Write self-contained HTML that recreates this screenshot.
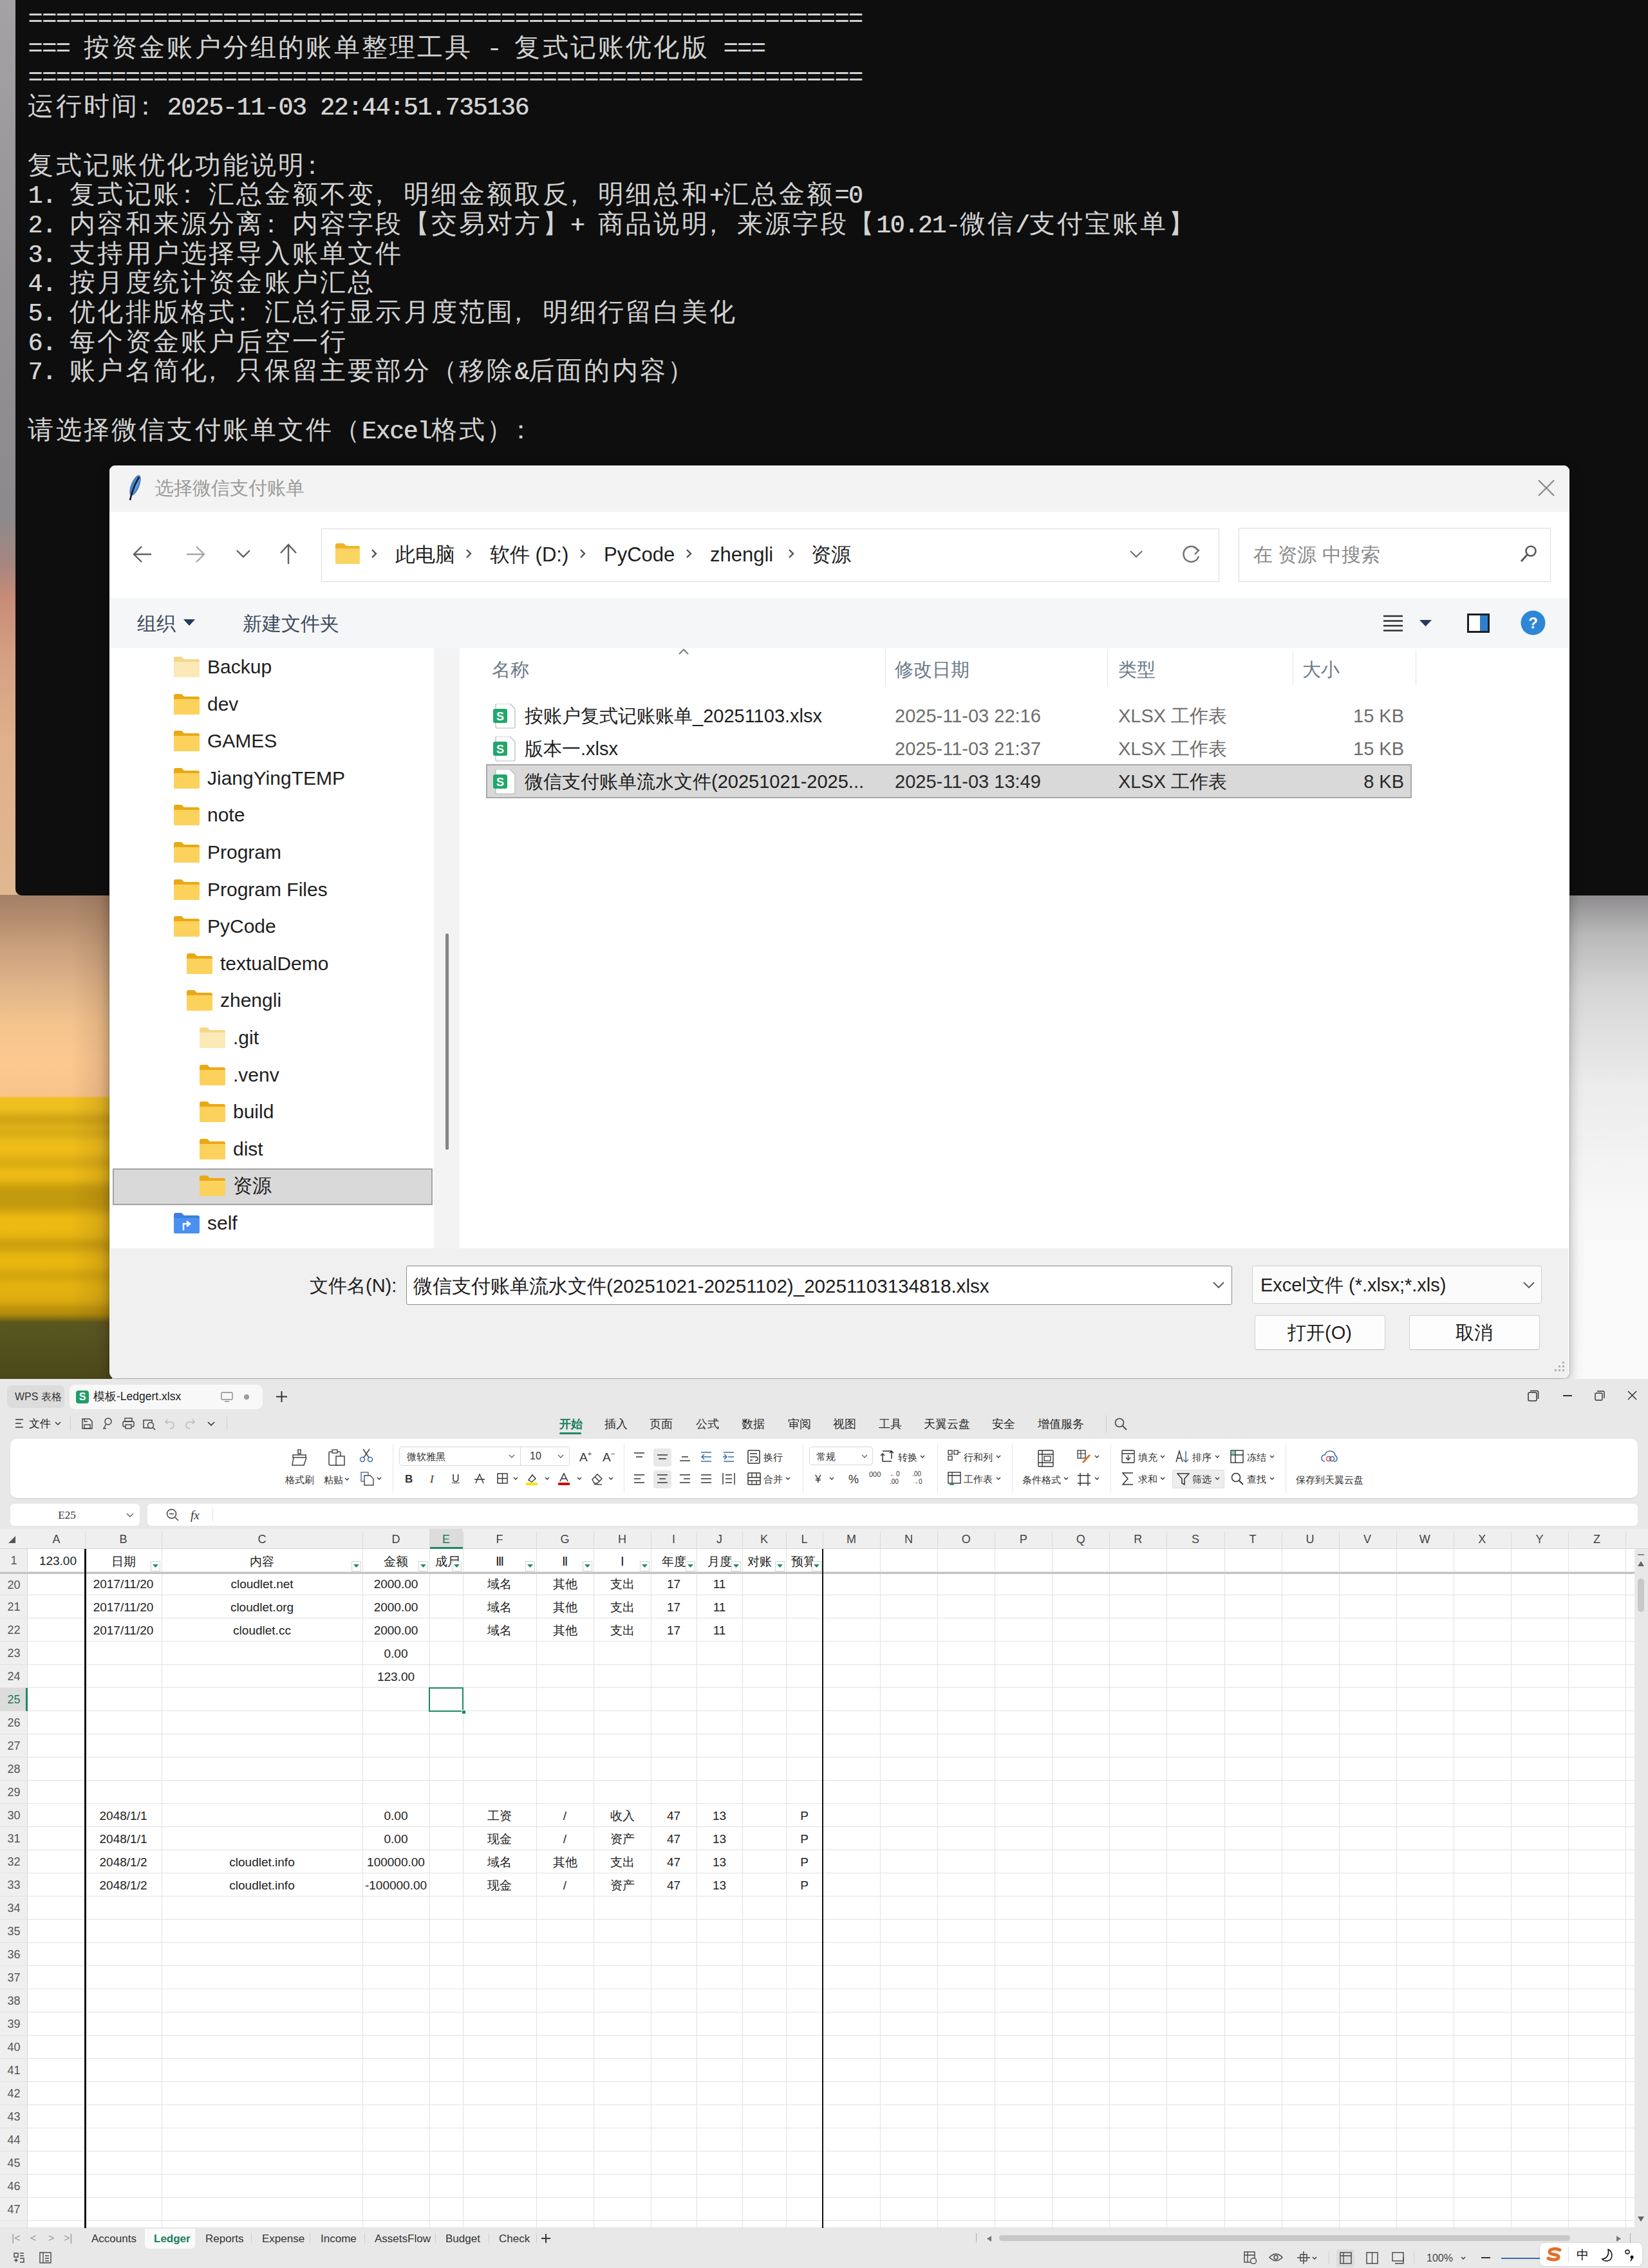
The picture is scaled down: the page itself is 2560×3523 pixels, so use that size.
<!DOCTYPE html><html><head><meta charset="utf-8"><style>
*{margin:0;padding:0}
html,body{width:2560px;height:3523px;overflow:hidden;background:#fff}
body{position:relative;font-family:"Liberation Sans",sans-serif}
div,svg{position:absolute}
.t{white-space:nowrap}
.tl{left:0;height:48px;width:2560px;font-family:"Liberation Mono",monospace;color:#d2d2d2}
.tl i{position:absolute;top:0;font-style:normal;line-height:48px}
.ta{font-size:38px;text-shadow:0.7px 0 0 currentColor}
.tc{font-size:40px;font-weight:500}
</style></head><body><div style="left:0px;top:0px;width:40px;height:1400px;background:linear-gradient(180deg,#a4a2a4 0px,#929092 500px,#8c8a8c 800px,#a88680 880px,#c88c78 930px,#d4a084 1020px,#deb08c 1150px,#e0b890 1400px)"></div>
<div style="left:0px;top:1390px;width:174px;height:753px;background:linear-gradient(180deg,#a48068 0px,#b08a6c 30px,#c8a07c 80px,#e0b488 140px,#f4c48e 200px,#fcc890 260px,#f8c48c 312px,#f0c020 316px,#eebc14 450px,#e8b610 600px,#d8a810 650px,#5a5820 664px,#4a4818 753px)"></div>
<div style="left:110px;top:1390px;width:64px;height:753px;background:linear-gradient(90deg,rgba(90,60,40,0),rgba(90,60,40,0.18));"></div>
<div style="left:-20px;top:1732px;width:214px;height:14px;background:rgba(100,75,0,0.3);filter:blur(7px)"></div>
<div style="left:-20px;top:1755px;width:214px;height:10px;background:rgba(100,75,0,0.25);filter:blur(7px)"></div>
<div style="left:-20px;top:1800px;width:214px;height:12px;background:rgba(100,75,0,0.22);filter:blur(7px)"></div>
<div style="left:-20px;top:1838px;width:214px;height:44px;background:rgba(100,75,0,0.3);filter:blur(7px)"></div>
<div style="left:-20px;top:1925px;width:214px;height:18px;background:rgba(100,75,0,0.25);filter:blur(7px)"></div>
<div style="left:-20px;top:1975px;width:214px;height:14px;background:rgba(100,75,0,0.2);filter:blur(7px)"></div>
<div style="left:-20px;top:2028px;width:214px;height:24px;background:rgba(100,75,0,0.3);filter:blur(7px)"></div>
<div style="left:2436px;top:1390px;width:124px;height:753px;background:linear-gradient(180deg,#8e8c8e 0px,#b8b8b8 60px,#d6d6d6 150px,#ececec 300px,#f8f8f8 500px,#fafafa 753px)"></div>
<div style="left:24px;top:0px;width:2536px;height:1391px;background:#0e0e0e;border-bottom-left-radius:10px"></div>
<div class="tl" style="top:7.0px"><i class="ta" style="left:43.4px">=</i><i class="ta" style="left:65.0px">=</i><i class="ta" style="left:86.6px">=</i><i class="ta" style="left:108.2px">=</i><i class="ta" style="left:129.8px">=</i><i class="ta" style="left:151.4px">=</i><i class="ta" style="left:173.0px">=</i><i class="ta" style="left:194.6px">=</i><i class="ta" style="left:216.2px">=</i><i class="ta" style="left:237.8px">=</i><i class="ta" style="left:259.4px">=</i><i class="ta" style="left:281.0px">=</i><i class="ta" style="left:302.6px">=</i><i class="ta" style="left:324.2px">=</i><i class="ta" style="left:345.8px">=</i><i class="ta" style="left:367.4px">=</i><i class="ta" style="left:389.0px">=</i><i class="ta" style="left:410.6px">=</i><i class="ta" style="left:432.2px">=</i><i class="ta" style="left:453.8px">=</i><i class="ta" style="left:475.4px">=</i><i class="ta" style="left:497.0px">=</i><i class="ta" style="left:518.6px">=</i><i class="ta" style="left:540.2px">=</i><i class="ta" style="left:561.8px">=</i><i class="ta" style="left:583.4px">=</i><i class="ta" style="left:605.0px">=</i><i class="ta" style="left:626.6px">=</i><i class="ta" style="left:648.2px">=</i><i class="ta" style="left:669.8px">=</i><i class="ta" style="left:691.4px">=</i><i class="ta" style="left:713.0px">=</i><i class="ta" style="left:734.6px">=</i><i class="ta" style="left:756.2px">=</i><i class="ta" style="left:777.8px">=</i><i class="ta" style="left:799.4px">=</i><i class="ta" style="left:821.0px">=</i><i class="ta" style="left:842.6px">=</i><i class="ta" style="left:864.2px">=</i><i class="ta" style="left:885.8px">=</i><i class="ta" style="left:907.4px">=</i><i class="ta" style="left:929.0px">=</i><i class="ta" style="left:950.6px">=</i><i class="ta" style="left:972.2px">=</i><i class="ta" style="left:993.8px">=</i><i class="ta" style="left:1015.4px">=</i><i class="ta" style="left:1037.0px">=</i><i class="ta" style="left:1058.6px">=</i><i class="ta" style="left:1080.2px">=</i><i class="ta" style="left:1101.8px">=</i><i class="ta" style="left:1123.4px">=</i><i class="ta" style="left:1145.0px">=</i><i class="ta" style="left:1166.6px">=</i><i class="ta" style="left:1188.2px">=</i><i class="ta" style="left:1209.8px">=</i><i class="ta" style="left:1231.4px">=</i><i class="ta" style="left:1253.0px">=</i><i class="ta" style="left:1274.6px">=</i><i class="ta" style="left:1296.2px">=</i><i class="ta" style="left:1317.8px">=</i></div>
<div class="tl" style="top:52.7px"><i class="ta" style="left:43.4px">=</i><i class="ta" style="left:65.0px">=</i><i class="ta" style="left:86.6px">=</i><i class="tc" style="left:129.8px">按</i><i class="tc" style="left:173.0px">资</i><i class="tc" style="left:216.2px">金</i><i class="tc" style="left:259.4px">账</i><i class="tc" style="left:302.6px">户</i><i class="tc" style="left:345.8px">分</i><i class="tc" style="left:389.0px">组</i><i class="tc" style="left:432.2px">的</i><i class="tc" style="left:475.4px">账</i><i class="tc" style="left:518.6px">单</i><i class="tc" style="left:561.8px">整</i><i class="tc" style="left:605.0px">理</i><i class="tc" style="left:648.2px">工</i><i class="tc" style="left:691.4px">具</i><i class="ta" style="left:756.2px">-</i><i class="tc" style="left:799.4px">复</i><i class="tc" style="left:842.6px">式</i><i class="tc" style="left:885.8px">记</i><i class="tc" style="left:929.0px">账</i><i class="tc" style="left:972.2px">优</i><i class="tc" style="left:1015.4px">化</i><i class="tc" style="left:1058.6px">版</i><i class="ta" style="left:1123.4px">=</i><i class="ta" style="left:1145.0px">=</i><i class="ta" style="left:1166.6px">=</i></div>
<div class="tl" style="top:98.4px"><i class="ta" style="left:43.4px">=</i><i class="ta" style="left:65.0px">=</i><i class="ta" style="left:86.6px">=</i><i class="ta" style="left:108.2px">=</i><i class="ta" style="left:129.8px">=</i><i class="ta" style="left:151.4px">=</i><i class="ta" style="left:173.0px">=</i><i class="ta" style="left:194.6px">=</i><i class="ta" style="left:216.2px">=</i><i class="ta" style="left:237.8px">=</i><i class="ta" style="left:259.4px">=</i><i class="ta" style="left:281.0px">=</i><i class="ta" style="left:302.6px">=</i><i class="ta" style="left:324.2px">=</i><i class="ta" style="left:345.8px">=</i><i class="ta" style="left:367.4px">=</i><i class="ta" style="left:389.0px">=</i><i class="ta" style="left:410.6px">=</i><i class="ta" style="left:432.2px">=</i><i class="ta" style="left:453.8px">=</i><i class="ta" style="left:475.4px">=</i><i class="ta" style="left:497.0px">=</i><i class="ta" style="left:518.6px">=</i><i class="ta" style="left:540.2px">=</i><i class="ta" style="left:561.8px">=</i><i class="ta" style="left:583.4px">=</i><i class="ta" style="left:605.0px">=</i><i class="ta" style="left:626.6px">=</i><i class="ta" style="left:648.2px">=</i><i class="ta" style="left:669.8px">=</i><i class="ta" style="left:691.4px">=</i><i class="ta" style="left:713.0px">=</i><i class="ta" style="left:734.6px">=</i><i class="ta" style="left:756.2px">=</i><i class="ta" style="left:777.8px">=</i><i class="ta" style="left:799.4px">=</i><i class="ta" style="left:821.0px">=</i><i class="ta" style="left:842.6px">=</i><i class="ta" style="left:864.2px">=</i><i class="ta" style="left:885.8px">=</i><i class="ta" style="left:907.4px">=</i><i class="ta" style="left:929.0px">=</i><i class="ta" style="left:950.6px">=</i><i class="ta" style="left:972.2px">=</i><i class="ta" style="left:993.8px">=</i><i class="ta" style="left:1015.4px">=</i><i class="ta" style="left:1037.0px">=</i><i class="ta" style="left:1058.6px">=</i><i class="ta" style="left:1080.2px">=</i><i class="ta" style="left:1101.8px">=</i><i class="ta" style="left:1123.4px">=</i><i class="ta" style="left:1145.0px">=</i><i class="ta" style="left:1166.6px">=</i><i class="ta" style="left:1188.2px">=</i><i class="ta" style="left:1209.8px">=</i><i class="ta" style="left:1231.4px">=</i><i class="ta" style="left:1253.0px">=</i><i class="ta" style="left:1274.6px">=</i><i class="ta" style="left:1296.2px">=</i><i class="ta" style="left:1317.8px">=</i></div>
<div class="tl" style="top:144.1px"><i class="tc" style="left:43.4px">运</i><i class="tc" style="left:86.6px">行</i><i class="tc" style="left:129.8px">时</i><i class="tc" style="left:173.0px">间</i><i class="tc" style="left:206.2px">：</i><i class="ta" style="left:259.4px">2</i><i class="ta" style="left:281.0px">0</i><i class="ta" style="left:302.6px">2</i><i class="ta" style="left:324.2px">5</i><i class="ta" style="left:345.8px">-</i><i class="ta" style="left:367.4px">1</i><i class="ta" style="left:389.0px">1</i><i class="ta" style="left:410.6px">-</i><i class="ta" style="left:432.2px">0</i><i class="ta" style="left:453.8px">3</i><i class="ta" style="left:497.0px">2</i><i class="ta" style="left:518.6px">2</i><i class="ta" style="left:540.2px">:</i><i class="ta" style="left:561.8px">4</i><i class="ta" style="left:583.4px">4</i><i class="ta" style="left:605.0px">:</i><i class="ta" style="left:626.6px">5</i><i class="ta" style="left:648.2px">1</i><i class="ta" style="left:669.8px">.</i><i class="ta" style="left:691.4px">7</i><i class="ta" style="left:713.0px">3</i><i class="ta" style="left:734.6px">5</i><i class="ta" style="left:756.2px">1</i><i class="ta" style="left:777.8px">3</i><i class="ta" style="left:799.4px">6</i></div>
<div class="tl" style="top:189.8px"></div>
<div class="tl" style="top:235.5px"><i class="tc" style="left:43.4px">复</i><i class="tc" style="left:86.6px">式</i><i class="tc" style="left:129.8px">记</i><i class="tc" style="left:173.0px">账</i><i class="tc" style="left:216.2px">优</i><i class="tc" style="left:259.4px">化</i><i class="tc" style="left:302.6px">功</i><i class="tc" style="left:345.8px">能</i><i class="tc" style="left:389.0px">说</i><i class="tc" style="left:432.2px">明</i><i class="tc" style="left:465.4px">：</i></div>
<div class="tl" style="top:281.2px"><i class="ta" style="left:43.4px">1</i><i class="ta" style="left:65.0px">.</i><i class="tc" style="left:108.2px">复</i><i class="tc" style="left:151.4px">式</i><i class="tc" style="left:194.6px">记</i><i class="tc" style="left:237.8px">账</i><i class="tc" style="left:271.0px">：</i><i class="tc" style="left:324.2px">汇</i><i class="tc" style="left:367.4px">总</i><i class="tc" style="left:410.6px">金</i><i class="tc" style="left:453.8px">额</i><i class="tc" style="left:497.0px">不</i><i class="tc" style="left:540.2px">变</i><i class="tc" style="left:569.4px">，</i><i class="tc" style="left:626.6px">明</i><i class="tc" style="left:669.8px">细</i><i class="tc" style="left:713.0px">金</i><i class="tc" style="left:756.2px">额</i><i class="tc" style="left:799.4px">取</i><i class="tc" style="left:842.6px">反</i><i class="tc" style="left:871.8px">，</i><i class="tc" style="left:929.0px">明</i><i class="tc" style="left:972.2px">细</i><i class="tc" style="left:1015.4px">总</i><i class="tc" style="left:1058.6px">和</i><i class="ta" style="left:1101.8px">+</i><i class="tc" style="left:1123.4px">汇</i><i class="tc" style="left:1166.6px">总</i><i class="tc" style="left:1209.8px">金</i><i class="tc" style="left:1253.0px">额</i><i class="ta" style="left:1296.2px">=</i><i class="ta" style="left:1317.8px">0</i></div>
<div class="tl" style="top:326.9px"><i class="ta" style="left:43.4px">2</i><i class="ta" style="left:65.0px">.</i><i class="tc" style="left:108.2px">内</i><i class="tc" style="left:151.4px">容</i><i class="tc" style="left:194.6px">和</i><i class="tc" style="left:237.8px">来</i><i class="tc" style="left:281.0px">源</i><i class="tc" style="left:324.2px">分</i><i class="tc" style="left:367.4px">离</i><i class="tc" style="left:400.6px">：</i><i class="tc" style="left:453.8px">内</i><i class="tc" style="left:497.0px">容</i><i class="tc" style="left:540.2px">字</i><i class="tc" style="left:583.4px">段</i><i class="tc" style="left:626.6px">【</i><i class="tc" style="left:669.8px">交</i><i class="tc" style="left:713.0px">易</i><i class="tc" style="left:756.2px">对</i><i class="tc" style="left:799.4px">方</i><i class="tc" style="left:842.6px">】</i><i class="ta" style="left:885.8px">+</i><i class="tc" style="left:929.0px">商</i><i class="tc" style="left:972.2px">品</i><i class="tc" style="left:1015.4px">说</i><i class="tc" style="left:1058.6px">明</i><i class="tc" style="left:1087.8px">，</i><i class="tc" style="left:1145.0px">来</i><i class="tc" style="left:1188.2px">源</i><i class="tc" style="left:1231.4px">字</i><i class="tc" style="left:1274.6px">段</i><i class="tc" style="left:1317.8px">【</i><i class="ta" style="left:1361.0px">1</i><i class="ta" style="left:1382.6px">0</i><i class="ta" style="left:1404.2px">.</i><i class="ta" style="left:1425.8px">2</i><i class="ta" style="left:1447.4px">1</i><i class="ta" style="left:1469.0px">-</i><i class="tc" style="left:1490.6px">微</i><i class="tc" style="left:1533.8px">信</i><i class="ta" style="left:1577.0px">/</i><i class="tc" style="left:1598.6px">支</i><i class="tc" style="left:1641.8px">付</i><i class="tc" style="left:1685.0px">宝</i><i class="tc" style="left:1728.2px">账</i><i class="tc" style="left:1771.4px">单</i><i class="tc" style="left:1814.6px">】</i></div>
<div class="tl" style="top:372.6px"><i class="ta" style="left:43.4px">3</i><i class="ta" style="left:65.0px">.</i><i class="tc" style="left:108.2px">支</i><i class="tc" style="left:151.4px">持</i><i class="tc" style="left:194.6px">用</i><i class="tc" style="left:237.8px">户</i><i class="tc" style="left:281.0px">选</i><i class="tc" style="left:324.2px">择</i><i class="tc" style="left:367.4px">导</i><i class="tc" style="left:410.6px">入</i><i class="tc" style="left:453.8px">账</i><i class="tc" style="left:497.0px">单</i><i class="tc" style="left:540.2px">文</i><i class="tc" style="left:583.4px">件</i></div>
<div class="tl" style="top:418.3px"><i class="ta" style="left:43.4px">4</i><i class="ta" style="left:65.0px">.</i><i class="tc" style="left:108.2px">按</i><i class="tc" style="left:151.4px">月</i><i class="tc" style="left:194.6px">度</i><i class="tc" style="left:237.8px">统</i><i class="tc" style="left:281.0px">计</i><i class="tc" style="left:324.2px">资</i><i class="tc" style="left:367.4px">金</i><i class="tc" style="left:410.6px">账</i><i class="tc" style="left:453.8px">户</i><i class="tc" style="left:497.0px">汇</i><i class="tc" style="left:540.2px">总</i></div>
<div class="tl" style="top:464.0px"><i class="ta" style="left:43.4px">5</i><i class="ta" style="left:65.0px">.</i><i class="tc" style="left:108.2px">优</i><i class="tc" style="left:151.4px">化</i><i class="tc" style="left:194.6px">排</i><i class="tc" style="left:237.8px">版</i><i class="tc" style="left:281.0px">格</i><i class="tc" style="left:324.2px">式</i><i class="tc" style="left:357.4px">：</i><i class="tc" style="left:410.6px">汇</i><i class="tc" style="left:453.8px">总</i><i class="tc" style="left:497.0px">行</i><i class="tc" style="left:540.2px">显</i><i class="tc" style="left:583.4px">示</i><i class="tc" style="left:626.6px">月</i><i class="tc" style="left:669.8px">度</i><i class="tc" style="left:713.0px">范</i><i class="tc" style="left:756.2px">围</i><i class="tc" style="left:785.4px">，</i><i class="tc" style="left:842.6px">明</i><i class="tc" style="left:885.8px">细</i><i class="tc" style="left:929.0px">行</i><i class="tc" style="left:972.2px">留</i><i class="tc" style="left:1015.4px">白</i><i class="tc" style="left:1058.6px">美</i><i class="tc" style="left:1101.8px">化</i></div>
<div class="tl" style="top:509.7px"><i class="ta" style="left:43.4px">6</i><i class="ta" style="left:65.0px">.</i><i class="tc" style="left:108.2px">每</i><i class="tc" style="left:151.4px">个</i><i class="tc" style="left:194.6px">资</i><i class="tc" style="left:237.8px">金</i><i class="tc" style="left:281.0px">账</i><i class="tc" style="left:324.2px">户</i><i class="tc" style="left:367.4px">后</i><i class="tc" style="left:410.6px">空</i><i class="tc" style="left:453.8px">一</i><i class="tc" style="left:497.0px">行</i></div>
<div class="tl" style="top:555.4px"><i class="ta" style="left:43.4px">7</i><i class="ta" style="left:65.0px">.</i><i class="tc" style="left:108.2px">账</i><i class="tc" style="left:151.4px">户</i><i class="tc" style="left:194.6px">名</i><i class="tc" style="left:237.8px">简</i><i class="tc" style="left:281.0px">化</i><i class="tc" style="left:310.2px">，</i><i class="tc" style="left:367.4px">只</i><i class="tc" style="left:410.6px">保</i><i class="tc" style="left:453.8px">留</i><i class="tc" style="left:497.0px">主</i><i class="tc" style="left:540.2px">要</i><i class="tc" style="left:583.4px">部</i><i class="tc" style="left:626.6px">分</i><i class="tc" style="left:669.8px">（</i><i class="tc" style="left:713.0px">移</i><i class="tc" style="left:756.2px">除</i><i class="ta" style="left:799.4px">&amp;</i><i class="tc" style="left:821.0px">后</i><i class="tc" style="left:864.2px">面</i><i class="tc" style="left:907.4px">的</i><i class="tc" style="left:950.6px">内</i><i class="tc" style="left:993.8px">容</i><i class="tc" style="left:1037.0px">）</i></div>
<div class="tl" style="top:601.1px"></div>
<div class="tl" style="top:646.8px"><i class="tc" style="left:43.4px">请</i><i class="tc" style="left:86.6px">选</i><i class="tc" style="left:129.8px">择</i><i class="tc" style="left:173.0px">微</i><i class="tc" style="left:216.2px">信</i><i class="tc" style="left:259.4px">支</i><i class="tc" style="left:302.6px">付</i><i class="tc" style="left:345.8px">账</i><i class="tc" style="left:389.0px">单</i><i class="tc" style="left:432.2px">文</i><i class="tc" style="left:475.4px">件</i><i class="tc" style="left:518.6px">（</i><i class="ta" style="left:561.8px">E</i><i class="ta" style="left:583.4px">x</i><i class="ta" style="left:605.0px">c</i><i class="ta" style="left:626.6px">e</i><i class="ta" style="left:648.2px">l</i><i class="tc" style="left:669.8px">格</i><i class="tc" style="left:713.0px">式</i><i class="tc" style="left:756.2px">）</i><i class="tc" style="left:789.4px">：</i></div>
<div style="left:170px;top:723px;width:2268px;height:1418px;background:#fff;border-radius:9px;box-shadow:0 0 0 1px rgba(0,0,0,0.18),0 6px 20px rgba(0,0,0,0.30)"></div>
<div style="left:170px;top:723px;width:2268px;height:72px;background:#f3f3f3;border-radius:9px 9px 0 0"></div>
<svg class="s" style="left:194px;top:735px;" width="30" height="44" viewBox="0 0 30 44"><ellipse cx="16" cy="19" rx="6.5" ry="17" transform="rotate(22 16 19)" fill="#4a82c0"/><ellipse cx="17" cy="17" rx="3" ry="12" transform="rotate(22 16 19)" fill="#7ab0e0" opacity="0.6"/><path d="M22 6 C16 16 11 28 8 42" stroke="#0c1c38" stroke-width="2.6" fill="none"/></svg>
<div class="t" style="left:241px;top:743.5px;font-size:29px;line-height:29px;color:#9a9a9a;font-weight:500">选择微信支付账单</div>
<svg class="s" style="left:2388px;top:744px;" width="28" height="28" viewBox="0 0 28 28"><path d="M2 2 L26 26 M26 2 L2 26" stroke="#8a8a8a" stroke-width="2.2"/></svg>
<svg class="s" style="left:205px;top:846px;" width="32" height="30" viewBox="0 0 32 30"><path d="M30 15 H3 M15 3 L3 15 L15 27" stroke="#606060" stroke-width="2.4" fill="none"/></svg>
<svg class="s" style="left:288px;top:846px;" width="32" height="30" viewBox="0 0 32 30"><path d="M2 15 H29 M17 3 L29 15 L17 27" stroke="#a8a8a8" stroke-width="2.4" fill="none"/></svg>
<svg class="s" style="left:366px;top:852px;" width="24" height="16" viewBox="0 0 24 16"><path d="M2 3 L12 13 L22 3" stroke="#606060" stroke-width="2.4" fill="none"/></svg>
<svg class="s" style="left:432px;top:843px;" width="32" height="34" viewBox="0 0 32 34"><path d="M16 33 V4 M4 16 L16 3 L28 16" stroke="#606060" stroke-width="2.4" fill="none"/></svg>
<div style="left:499px;top:821px;width:1395px;height:83px;background:#fff;border:1.5px solid #dadada;box-sizing:border-box"></div>
<svg class="s" style="left:521px;top:843px;" width="38" height="33" viewBox="0 0 38 33"><path d="M0 4 Q0 1 3 1 H13 L17 5 H35 Q38 5 38 8 V30 Q38 33 35 33 H3 Q0 33 0 30 Z" fill="#f0b429"/><path d="M0 9 H38 V30 Q38 33 35 33 H3 Q0 33 0 30 Z" fill="#fcd462"/></svg>
<svg class="s" style="left:575px;top:851px;" width="12" height="18" viewBox="0 0 12 18"><path d="M3 3 L9 9 L3 15" stroke="#505050" stroke-width="2.4" fill="none"/></svg>
<div class="t" style="left:614px;top:845.5px;font-size:31px;line-height:31px;color:#1e1e1e;">此电脑</div>
<svg class="s" style="left:722px;top:851px;" width="12" height="18" viewBox="0 0 12 18"><path d="M3 3 L9 9 L3 15" stroke="#505050" stroke-width="2.4" fill="none"/></svg>
<div class="t" style="left:761px;top:845.5px;font-size:31px;line-height:31px;color:#1e1e1e;">软件 (D:)</div>
<svg class="s" style="left:899px;top:851px;" width="12" height="18" viewBox="0 0 12 18"><path d="M3 3 L9 9 L3 15" stroke="#505050" stroke-width="2.4" fill="none"/></svg>
<div class="t" style="left:938px;top:845.5px;font-size:31px;line-height:31px;color:#1e1e1e;">PyCode</div>
<svg class="s" style="left:1064px;top:851px;" width="12" height="18" viewBox="0 0 12 18"><path d="M3 3 L9 9 L3 15" stroke="#505050" stroke-width="2.4" fill="none"/></svg>
<div class="t" style="left:1103px;top:845.5px;font-size:31px;line-height:31px;color:#1e1e1e;">zhengli</div>
<svg class="s" style="left:1223px;top:851px;" width="12" height="18" viewBox="0 0 12 18"><path d="M3 3 L9 9 L3 15" stroke="#505050" stroke-width="2.4" fill="none"/></svg>
<div class="t" style="left:1260px;top:845.5px;font-size:31px;line-height:31px;color:#1e1e1e;">资源</div>
<svg class="s" style="left:1754px;top:854px;" width="22" height="14" viewBox="0 0 22 14"><path d="M2 2 L11 11 L20 2" stroke="#6a6a6a" stroke-width="2" fill="none"/></svg>
<svg class="s" style="left:1834px;top:845px;" width="32" height="32" viewBox="0 0 32 32"><path d="M27 10 A12 12 0 1 0 28 19" stroke="#707070" stroke-width="2.4" fill="none"/><path d="M20 4 L28 10 L22 16" stroke="#707070" stroke-width="2.4" fill="none"/></svg>
<div style="left:1924px;top:820px;width:485px;height:84px;background:#fff;border:1.5px solid #dadada;box-sizing:border-box"></div>
<div class="t" style="left:1947px;top:847.0px;font-size:30px;line-height:30px;color:#8a8a8a;">在 资源 中搜索</div>
<svg class="s" style="left:2360px;top:846px;" width="28" height="30" viewBox="0 0 28 30"><circle cx="18" cy="10" r="7.5" stroke="#5a5a5a" stroke-width="2.6" fill="none"/><path d="M12.5 15.5 L3 26" stroke="#5a5a5a" stroke-width="3"/></svg>
<div style="left:171px;top:929px;width:2266px;height:78px;background:#f5f6f7"></div>
<div class="t" style="left:213px;top:954.0px;font-size:30px;line-height:30px;color:#3e4a5e;">组织</div>
<svg class="s" style="left:285px;top:962px;" width="18" height="11" viewBox="0 0 18 11"><path d="M0 0 H18 L9 10 Z" fill="#243a5e"/></svg>
<div class="t" style="left:377px;top:954.0px;font-size:30px;line-height:30px;color:#3e4a5e;">新建文件夹</div>
<svg class="s" style="left:2149px;top:955px;" width="30" height="26" viewBox="0 0 30 26"><path d="M0 2 H30 M0 9.5 H30 M0 17 H30 M0 24.5 H30" stroke="#303030" stroke-width="2.6"/></svg>
<svg class="s" style="left:2205px;top:963px;" width="19" height="11" viewBox="0 0 19 11"><path d="M0 0 H19 L9.5 10 Z" fill="#243a5e"/></svg>
<svg class="s" style="left:2279px;top:953px;" width="35" height="30" viewBox="0 0 35 30"><rect x="1.5" y="1.5" width="32" height="27" fill="#fff" stroke="#202020" stroke-width="3"/><rect x="20" y="3" width="12" height="24" fill="#2f7fd0"/></svg>
<svg class="s" style="left:2362px;top:948px;" width="39" height="39" viewBox="0 0 39 39"><circle cx="19.5" cy="19.5" r="19" fill="#2d86d6"/><text x="19.5" y="28" text-anchor="middle" font-family="Liberation Sans" font-weight="bold" font-size="24" fill="#fff">?</text></svg>
<div style="left:674px;top:1007px;width:40px;height:932px;background:#f3f3f3"></div>
<div style="left:175px;top:1815px;width:497px;height:57px;background:#d9d9d9;border:2px solid #a3a3a3;box-sizing:border-box"></div>
<svg class="s" style="left:270px;top:1020.0px;" width="40" height="32" viewBox="0 0 40 32"><path d="M0 3 Q0 0 3 0 H12 L16 4 H37 Q40 4 40 7 V29 Q40 32 37 32 H3 Q0 32 0 29 Z" fill="#f4d88a"/><path d="M0 8 H40 V29 Q40 32 37 32 H3 Q0 32 0 29 Z" fill="#fbe9b8"/></svg>
<div class="t" style="left:322px;top:1021.0px;font-size:30px;line-height:30px;color:#1e1e1e;">Backup</div>
<svg class="s" style="left:270px;top:1077.6px;" width="40" height="32" viewBox="0 0 40 32"><path d="M0 3 Q0 0 3 0 H12 L16 4 H37 Q40 4 40 7 V29 Q40 32 37 32 H3 Q0 32 0 29 Z" fill="#e9a916"/><path d="M0 8 H40 V29 Q40 32 37 32 H3 Q0 32 0 29 Z" fill="#fcd25c"/></svg>
<div class="t" style="left:322px;top:1078.6px;font-size:30px;line-height:30px;color:#1e1e1e;">dev</div>
<svg class="s" style="left:270px;top:1135.2px;" width="40" height="32" viewBox="0 0 40 32"><path d="M0 3 Q0 0 3 0 H12 L16 4 H37 Q40 4 40 7 V29 Q40 32 37 32 H3 Q0 32 0 29 Z" fill="#e9a916"/><path d="M0 8 H40 V29 Q40 32 37 32 H3 Q0 32 0 29 Z" fill="#fcd25c"/></svg>
<div class="t" style="left:322px;top:1136.2px;font-size:30px;line-height:30px;color:#1e1e1e;">GAMES</div>
<svg class="s" style="left:270px;top:1192.8px;" width="40" height="32" viewBox="0 0 40 32"><path d="M0 3 Q0 0 3 0 H12 L16 4 H37 Q40 4 40 7 V29 Q40 32 37 32 H3 Q0 32 0 29 Z" fill="#e9a916"/><path d="M0 8 H40 V29 Q40 32 37 32 H3 Q0 32 0 29 Z" fill="#fcd25c"/></svg>
<div class="t" style="left:322px;top:1193.8px;font-size:30px;line-height:30px;color:#1e1e1e;">JiangYingTEMP</div>
<svg class="s" style="left:270px;top:1250.4px;" width="40" height="32" viewBox="0 0 40 32"><path d="M0 3 Q0 0 3 0 H12 L16 4 H37 Q40 4 40 7 V29 Q40 32 37 32 H3 Q0 32 0 29 Z" fill="#e9a916"/><path d="M0 8 H40 V29 Q40 32 37 32 H3 Q0 32 0 29 Z" fill="#fcd25c"/></svg>
<div class="t" style="left:322px;top:1251.4px;font-size:30px;line-height:30px;color:#1e1e1e;">note</div>
<svg class="s" style="left:270px;top:1308.0px;" width="40" height="32" viewBox="0 0 40 32"><path d="M0 3 Q0 0 3 0 H12 L16 4 H37 Q40 4 40 7 V29 Q40 32 37 32 H3 Q0 32 0 29 Z" fill="#e9a916"/><path d="M0 8 H40 V29 Q40 32 37 32 H3 Q0 32 0 29 Z" fill="#fcd25c"/></svg>
<div class="t" style="left:322px;top:1309.0px;font-size:30px;line-height:30px;color:#1e1e1e;">Program</div>
<svg class="s" style="left:270px;top:1365.6px;" width="40" height="32" viewBox="0 0 40 32"><path d="M0 3 Q0 0 3 0 H12 L16 4 H37 Q40 4 40 7 V29 Q40 32 37 32 H3 Q0 32 0 29 Z" fill="#e9a916"/><path d="M0 8 H40 V29 Q40 32 37 32 H3 Q0 32 0 29 Z" fill="#fcd25c"/></svg>
<div class="t" style="left:322px;top:1366.6px;font-size:30px;line-height:30px;color:#1e1e1e;">Program Files</div>
<svg class="s" style="left:270px;top:1423.2px;" width="40" height="32" viewBox="0 0 40 32"><path d="M0 3 Q0 0 3 0 H12 L16 4 H37 Q40 4 40 7 V29 Q40 32 37 32 H3 Q0 32 0 29 Z" fill="#e9a916"/><path d="M0 8 H40 V29 Q40 32 37 32 H3 Q0 32 0 29 Z" fill="#fcd25c"/></svg>
<div class="t" style="left:322px;top:1424.2px;font-size:30px;line-height:30px;color:#1e1e1e;">PyCode</div>
<svg class="s" style="left:290px;top:1480.8px;" width="40" height="32" viewBox="0 0 40 32"><path d="M0 3 Q0 0 3 0 H12 L16 4 H37 Q40 4 40 7 V29 Q40 32 37 32 H3 Q0 32 0 29 Z" fill="#e9a916"/><path d="M0 8 H40 V29 Q40 32 37 32 H3 Q0 32 0 29 Z" fill="#fcd25c"/></svg>
<div class="t" style="left:342px;top:1481.8px;font-size:30px;line-height:30px;color:#1e1e1e;">textualDemo</div>
<svg class="s" style="left:290px;top:1538.4px;" width="40" height="32" viewBox="0 0 40 32"><path d="M0 3 Q0 0 3 0 H12 L16 4 H37 Q40 4 40 7 V29 Q40 32 37 32 H3 Q0 32 0 29 Z" fill="#e9a916"/><path d="M0 8 H40 V29 Q40 32 37 32 H3 Q0 32 0 29 Z" fill="#fcd25c"/></svg>
<div class="t" style="left:342px;top:1539.4px;font-size:30px;line-height:30px;color:#1e1e1e;">zhengli</div>
<svg class="s" style="left:310px;top:1596.0px;" width="40" height="32" viewBox="0 0 40 32"><path d="M0 3 Q0 0 3 0 H12 L16 4 H37 Q40 4 40 7 V29 Q40 32 37 32 H3 Q0 32 0 29 Z" fill="#f4d88a"/><path d="M0 8 H40 V29 Q40 32 37 32 H3 Q0 32 0 29 Z" fill="#fbe9b8"/></svg>
<div class="t" style="left:362px;top:1597.0px;font-size:30px;line-height:30px;color:#1e1e1e;">.git</div>
<svg class="s" style="left:310px;top:1653.6px;" width="40" height="32" viewBox="0 0 40 32"><path d="M0 3 Q0 0 3 0 H12 L16 4 H37 Q40 4 40 7 V29 Q40 32 37 32 H3 Q0 32 0 29 Z" fill="#e9a916"/><path d="M0 8 H40 V29 Q40 32 37 32 H3 Q0 32 0 29 Z" fill="#fcd25c"/></svg>
<div class="t" style="left:362px;top:1654.6px;font-size:30px;line-height:30px;color:#1e1e1e;">.venv</div>
<svg class="s" style="left:310px;top:1711.2px;" width="40" height="32" viewBox="0 0 40 32"><path d="M0 3 Q0 0 3 0 H12 L16 4 H37 Q40 4 40 7 V29 Q40 32 37 32 H3 Q0 32 0 29 Z" fill="#e9a916"/><path d="M0 8 H40 V29 Q40 32 37 32 H3 Q0 32 0 29 Z" fill="#fcd25c"/></svg>
<div class="t" style="left:362px;top:1712.2px;font-size:30px;line-height:30px;color:#1e1e1e;">build</div>
<svg class="s" style="left:310px;top:1768.8000000000002px;" width="40" height="32" viewBox="0 0 40 32"><path d="M0 3 Q0 0 3 0 H12 L16 4 H37 Q40 4 40 7 V29 Q40 32 37 32 H3 Q0 32 0 29 Z" fill="#e9a916"/><path d="M0 8 H40 V29 Q40 32 37 32 H3 Q0 32 0 29 Z" fill="#fcd25c"/></svg>
<div class="t" style="left:362px;top:1769.8px;font-size:30px;line-height:30px;color:#1e1e1e;">dist</div>
<svg class="s" style="left:310px;top:1826.4px;" width="40" height="32" viewBox="0 0 40 32"><path d="M0 3 Q0 0 3 0 H12 L16 4 H37 Q40 4 40 7 V29 Q40 32 37 32 H3 Q0 32 0 29 Z" fill="#e9a916"/><path d="M0 8 H40 V29 Q40 32 37 32 H3 Q0 32 0 29 Z" fill="#fcd25c"/></svg>
<div class="t" style="left:362px;top:1827.4px;font-size:30px;line-height:30px;color:#1e1e1e;">资源</div>
<svg class="s" style="left:270px;top:1884.0px;" width="40" height="32" viewBox="0 0 40 32"><path d="M0 3 Q0 0 3 0 H12 L16 4 H37 Q40 4 40 7 V29 Q40 32 37 32 H3 Q0 32 0 29 Z" fill="#3d7fe0"/><path d="M0 8 H40 V29 Q40 32 37 32 H3 Q0 32 0 29 Z" fill="#4a90f0"/><path d="M15 27 V17 H24 M20 13 L25 17 L20 21" stroke="#fff" stroke-width="2.5" fill="none"/></svg>
<div class="t" style="left:322px;top:1885.0px;font-size:30px;line-height:30px;color:#1e1e1e;">self</div>
<div style="left:692px;top:1450px;width:5px;height:336px;background:#858585;border-radius:3px"></div>
<div class="t" style="left:764px;top:1025.5px;font-size:29px;line-height:29px;color:#6b7a8a;">名称</div>
<svg class="s" style="left:1053px;top:1007px;" width="18" height="11" viewBox="0 0 18 11"><path d="M2 9 L9 2 L16 9" stroke="#7a7a7a" stroke-width="2" fill="none"/></svg>
<div style="left:1375px;top:1010px;width:1px;height:55px;background:#e5e5e5"></div>
<div style="left:1720px;top:1010px;width:1px;height:55px;background:#e5e5e5"></div>
<div style="left:2008px;top:1010px;width:1px;height:55px;background:#e5e5e5"></div>
<div style="left:2199px;top:1010px;width:1px;height:55px;background:#e5e5e5"></div>
<div class="t" style="left:1390px;top:1025.5px;font-size:29px;line-height:29px;color:#6b7a8a;">修改日期</div>
<div class="t" style="left:1737px;top:1025.5px;font-size:29px;line-height:29px;color:#6b7a8a;">类型</div>
<div class="t" style="left:2023px;top:1025.5px;font-size:29px;line-height:29px;color:#6b7a8a;">大小</div>
<div style="left:755px;top:1187px;width:1438px;height:53px;background:#d9d9d9;border:2px solid #a8a8a8;box-sizing:border-box"></div>
<svg class="s" style="left:766px;top:1093px;" width="36" height="40" viewBox="0 0 36 40"><path d="M6 0 H26 L34 8 V36 Q34 38 32 38 H6 Q4 38 4 36 V2 Q4 0 6 0 Z" fill="#fff" stroke="#b8b8b8" stroke-width="1.2"/><rect x="0" y="8" width="22" height="22" rx="3" fill="#21a86a"/><text x="11" y="26" text-anchor="middle" font-family="Liberation Sans" font-weight="bold" font-size="18" fill="#fff">S</text></svg>
<div class="t" style="left:815px;top:1097.5px;font-size:29px;line-height:29px;color:#1e1e1e;">按账户复式记账账单_20251103.xlsx</div>
<div class="t" style="left:1390px;top:1097.5px;font-size:29px;line-height:29px;color:#6e6e6e;">2025-11-03 22:16</div>
<div class="t" style="left:1737px;top:1097.5px;font-size:29px;line-height:29px;color:#6e6e6e;">XLSX 工作表</div>
<div class="t" style="left:1781.0px;width:400px;text-align:right;top:1097.5px;font-size:29px;line-height:29px;color:#6e6e6e;">15 KB</div>
<svg class="s" style="left:766px;top:1144px;" width="36" height="40" viewBox="0 0 36 40"><path d="M6 0 H26 L34 8 V36 Q34 38 32 38 H6 Q4 38 4 36 V2 Q4 0 6 0 Z" fill="#fff" stroke="#b8b8b8" stroke-width="1.2"/><rect x="0" y="8" width="22" height="22" rx="3" fill="#21a86a"/><text x="11" y="26" text-anchor="middle" font-family="Liberation Sans" font-weight="bold" font-size="18" fill="#fff">S</text></svg>
<div class="t" style="left:815px;top:1148.5px;font-size:29px;line-height:29px;color:#1e1e1e;">版本一.xlsx</div>
<div class="t" style="left:1390px;top:1148.5px;font-size:29px;line-height:29px;color:#6e6e6e;">2025-11-03 21:37</div>
<div class="t" style="left:1737px;top:1148.5px;font-size:29px;line-height:29px;color:#6e6e6e;">XLSX 工作表</div>
<div class="t" style="left:1781.0px;width:400px;text-align:right;top:1148.5px;font-size:29px;line-height:29px;color:#6e6e6e;">15 KB</div>
<svg class="s" style="left:766px;top:1195px;" width="36" height="40" viewBox="0 0 36 40"><path d="M6 0 H26 L34 8 V36 Q34 38 32 38 H6 Q4 38 4 36 V2 Q4 0 6 0 Z" fill="#fff" stroke="#b8b8b8" stroke-width="1.2"/><rect x="0" y="8" width="22" height="22" rx="3" fill="#21a86a"/><text x="11" y="26" text-anchor="middle" font-family="Liberation Sans" font-weight="bold" font-size="18" fill="#fff">S</text></svg>
<div class="t" style="left:815px;top:1199.5px;font-size:29px;line-height:29px;color:#1e1e1e;">微信支付账单流水文件(20251021-2025...</div>
<div class="t" style="left:1390px;top:1199.5px;font-size:29px;line-height:29px;color:#2a2a2a;">2025-11-03 13:49</div>
<div class="t" style="left:1737px;top:1199.5px;font-size:29px;line-height:29px;color:#2a2a2a;">XLSX 工作表</div>
<div class="t" style="left:1781.0px;width:400px;text-align:right;top:1199.5px;font-size:29px;line-height:29px;color:#2a2a2a;">8 KB</div>
<div style="left:171px;top:1939px;width:2266px;height:202px;background:#f0f0f0;border-radius:0 0 9px 9px"></div>
<div class="t" style="left:481px;top:1982.5px;font-size:29px;line-height:29px;color:#1e1e1e;">文件名(N):</div>
<div style="left:631px;top:1966px;width:1283px;height:61px;background:#fff;border:1.5px solid #8c8c8c;box-sizing:border-box;border-radius:3px"></div>
<div class="t" style="left:642px;top:1983.2px;font-size:29.6px;line-height:29.6px;color:#1e1e1e;">微信支付账单流水文件(20251021-20251102)_20251103134818.xlsx</div>
<svg class="s" style="left:1883px;top:1990px;" width="20" height="12" viewBox="0 0 20 12"><path d="M2 2 L10 10 L18 2" stroke="#555" stroke-width="1.8" fill="none"/></svg>
<div style="left:1945px;top:1966px;width:450px;height:59px;background:#fbfbfb;border:1.5px solid #d0d0d0;box-sizing:border-box;border-radius:4px"></div>
<div class="t" style="left:1958px;top:1981.5px;font-size:29px;line-height:29px;color:#1e1e1e;">Excel文件 (*.xlsx;*.xls)</div>
<svg class="s" style="left:2365px;top:1990px;" width="20" height="12" viewBox="0 0 20 12"><path d="M2 2 L10 10 L18 2" stroke="#555" stroke-width="1.8" fill="none"/></svg>
<div style="left:1949px;top:2043px;width:203px;height:54px;background:#fdfdfd;border:1.5px solid #d0d0d0;border-bottom-color:#b8b8b8;box-sizing:border-box;border-radius:4px"></div>
<div class="t" style="left:1850.0px;width:400px;text-align:center;top:2055.5px;font-size:29px;line-height:29px;color:#1e1e1e;">打开(O)</div>
<div style="left:2189px;top:2043px;width:203px;height:54px;background:#fdfdfd;border:1.5px solid #d0d0d0;border-bottom-color:#b8b8b8;box-sizing:border-box;border-radius:4px"></div>
<div class="t" style="left:2090.0px;width:400px;text-align:center;top:2055.5px;font-size:29px;line-height:29px;color:#1e1e1e;">取消</div>
<svg class="s" style="left:2412px;top:2112px;" width="20" height="20" viewBox="0 0 20 20"><g fill="#b0b0b0"><rect x="15" y="3" width="3" height="3"/><rect x="9" y="9" width="3" height="3"/><rect x="15" y="9" width="3" height="3"/><rect x="3" y="15" width="3" height="3"/><rect x="9" y="15" width="3" height="3"/><rect x="15" y="15" width="3" height="3"/></g></svg>
<div style="left:0px;top:2142px;width:2560px;height:1381px;background:#e8e8e8"></div>
<div style="left:11px;top:2152px;width:89px;height:35px;background:#dcdcdc;border-radius:7px"></div>
<div class="t" style="left:23px;top:2162.0px;font-size:16px;line-height:16px;color:#333;">WPS 表格</div>
<div style="left:108px;top:2151px;width:300px;height:38px;background:#f8f8f8;border-radius:9px"></div>
<div style="left:118px;top:2160px;width:20px;height:20px;background:#1f9d68;border-radius:4px"></div>
<div class="t" style="left:118.0px;width:20px;text-align:center;top:2162.0px;font-size:16px;line-height:16px;color:#fff;font-weight:bold">S</div>
<div class="t" style="left:145px;top:2161.2px;font-size:17.5px;line-height:17.5px;color:#222;">模板-Ledgert.xlsx</div>
<svg class="s" style="left:343px;top:2162px;" width="19" height="16" viewBox="0 0 19 16"><rect x="1" y="1" width="17" height="11" rx="1.5" stroke="#888" stroke-width="1.4" fill="none"/><path d="M6 15 H13" stroke="#888" stroke-width="1.4"/></svg>
<div style="left:379px;top:2166px;width:8px;height:8px;background:#9a9a9a;border-radius:50%"></div>
<svg class="s" style="left:428px;top:2160px;" width="19" height="19" viewBox="0 0 19 19"><path d="M9.5 1 V18 M1 9.5 H18" stroke="#333" stroke-width="2"/></svg>
<svg class="s" style="left:2373px;top:2159px;" width="18" height="18" viewBox="0 0 18 18"><rect x="1" y="4" width="13" height="13" rx="2" stroke="#333" stroke-width="1.5" fill="none"/><path d="M4 1.5 H14.5 Q16.5 1.5 16.5 3.5 V14" stroke="#333" stroke-width="1.5" fill="none"/></svg>
<div style="left:2428px;top:2167px;width:14px;height:1.6px;background:#333"></div>
<svg class="s" style="left:2477px;top:2160px;" width="16" height="16" viewBox="0 0 16 16"><rect x="1" y="4" width="11" height="11" rx="1.5" stroke="#333" stroke-width="1.4" fill="none"/><path d="M4 1 H13 Q15 1 15 3 V12" stroke="#333" stroke-width="1.4" fill="none"/></svg>
<svg class="s" style="left:2528px;top:2160px;" width="15" height="15" viewBox="0 0 15 15"><path d="M1 1 L14 14 M14 1 L1 14" stroke="#333" stroke-width="1.5"/></svg>
<svg class="s" style="left:24px;top:2204px;" width="12" height="14" viewBox="0 0 12 14"><path d="M0 1 H12 M0 7 H9 M0 13 H12" stroke="#333" stroke-width="1.5"/></svg>
<div class="t" style="left:45px;top:2202.5px;font-size:17px;line-height:17px;color:#222;">文件</div>
<svg class="s" style="left:85px;top:2208px;" width="10" height="6" viewBox="0 0 10 6"><path d="M1 1 L5 5 L9 1" stroke="#333" stroke-width="1.4" fill="none"/></svg>
<div style="left:109px;top:2200px;width:1px;height:22px;background:#cfcfcf"></div>
<svg class="s" style="left:126px;top:2202px;" width="19" height="19" viewBox="0 0 19 19"><path d="M2 2 H13 L17 6 V17 H2 Z" stroke="#444" stroke-width="1.5" fill="none"/><rect x="5" y="11" width="9" height="6" stroke="#444" stroke-width="1.4" fill="none"/><path d="M5 2 V6 H10" stroke="#444" stroke-width="1.3" fill="none"/></svg>
<svg class="s" style="left:159px;top:2202px;" width="16" height="19" viewBox="0 0 16 19"><circle cx="9" cy="6" r="5" stroke="#444" stroke-width="1.5" fill="none"/><path d="M6 10 L2 17 H6" stroke="#444" stroke-width="1.5" fill="none"/></svg>
<svg class="s" style="left:190px;top:2202px;" width="19" height="18" viewBox="0 0 19 18"><rect x="4" y="1" width="11" height="5" stroke="#444" stroke-width="1.4" fill="none"/><rect x="1" y="6" width="17" height="8" rx="2" stroke="#444" stroke-width="1.5" fill="none"/><rect x="5" y="11" width="9" height="6" stroke="#444" stroke-width="1.4" fill="#e8e8e8"/></svg>
<svg class="s" style="left:222px;top:2202px;" width="20" height="20" viewBox="0 0 20 20"><rect x="1" y="4" width="13" height="12" stroke="#444" stroke-width="1.5" fill="none"/><circle cx="12" cy="12" r="4.5" stroke="#444" stroke-width="1.5" fill="#e8e8e8"/><path d="M15 15 L19 19" stroke="#444" stroke-width="1.6"/></svg>
<svg class="s" style="left:256px;top:2203px;" width="15" height="17" viewBox="0 0 15 17"><path d="M4 2 L1 6 L5 9 M1 6 H9 Q14 6 14 11 Q14 16 8 16" stroke="#bbb" stroke-width="1.5" fill="none"/></svg>
<svg class="s" style="left:288px;top:2203px;" width="15" height="17" viewBox="0 0 15 17"><path d="M11 2 L14 6 L10 9 M14 6 H6 Q1 6 1 11 Q1 16 7 16" stroke="#bbb" stroke-width="1.5" fill="none"/></svg>
<svg class="s" style="left:322px;top:2208px;" width="12" height="7" viewBox="0 0 12 7"><path d="M1 1 L6 6 L11 1" stroke="#333" stroke-width="1.6" fill="none"/></svg>
<div style="left:352px;top:2200px;width:1px;height:22px;background:#cfcfcf"></div>
<div class="t" style="left:869px;top:2203.0px;font-size:18px;line-height:18px;color:#167c5a;font-weight:bold">开始</div>
<div style="left:869px;top:2225px;width:34px;height:2.5px;background:#1b8a63;border-radius:2px"></div>
<div class="t" style="left:939px;top:2203.0px;font-size:18px;line-height:18px;color:#2a2a2a;">插入</div>
<div class="t" style="left:1009px;top:2203.0px;font-size:18px;line-height:18px;color:#2a2a2a;">页面</div>
<div class="t" style="left:1081px;top:2203.0px;font-size:18px;line-height:18px;color:#2a2a2a;">公式</div>
<div class="t" style="left:1152px;top:2203.0px;font-size:18px;line-height:18px;color:#2a2a2a;">数据</div>
<div class="t" style="left:1224px;top:2203.0px;font-size:18px;line-height:18px;color:#2a2a2a;">审阅</div>
<div class="t" style="left:1294px;top:2203.0px;font-size:18px;line-height:18px;color:#2a2a2a;">视图</div>
<div class="t" style="left:1365px;top:2203.0px;font-size:18px;line-height:18px;color:#2a2a2a;">工具</div>
<div class="t" style="left:1435px;top:2203.0px;font-size:18px;line-height:18px;color:#2a2a2a;">天翼云盘</div>
<div class="t" style="left:1541px;top:2203.0px;font-size:18px;line-height:18px;color:#2a2a2a;">安全</div>
<div class="t" style="left:1612px;top:2203.0px;font-size:18px;line-height:18px;color:#2a2a2a;">增值服务</div>
<div style="left:1718px;top:2198px;width:1px;height:28px;background:#cfcfcf"></div>
<svg class="s" style="left:1731px;top:2202px;" width="20" height="20" viewBox="0 0 20 20"><circle cx="8" cy="8" r="6.5" stroke="#444" stroke-width="1.6" fill="none"/><path d="M13 13 L19 19" stroke="#444" stroke-width="1.8"/></svg>
<div style="left:16px;top:2235px;width:2528px;height:92px;background:#fff;border-radius:10px;box-shadow:0 1px 2px rgba(0,0,0,0.12)"></div>
<svg class="s" style="left:452px;top:2250px;" width="26" height="28" viewBox="0 0 26 28"><path d="M11 2 H15 V8 H11 Z M3 10 H23 V14 H3 Z M4 14 L2 26 H20 L24 14" stroke="#444" stroke-width="1.5" fill="none"/></svg>
<div class="t" style="left:443px;top:2290.5px;font-size:15px;line-height:15px;color:#333;">格式刷</div>
<svg class="s" style="left:509px;top:2250px;" width="28" height="28" viewBox="0 0 28 28"><rect x="2" y="5" width="18" height="21" rx="2" stroke="#444" stroke-width="1.5" fill="none"/><rect x="7" y="2" width="8" height="5" stroke="#444" stroke-width="1.4" fill="#fff"/><rect x="13" y="12" width="13" height="14" stroke="#444" stroke-width="1.5" fill="#fff"/></svg>
<div class="t" style="left:503px;top:2290.5px;font-size:15px;line-height:15px;color:#333;">粘贴</div>
<svg class="s" style="left:535px;top:2295px;" width="8" height="5" viewBox="0 0 8 5"><path d="M1 1 L4 4 L7 1" stroke="#333" stroke-width="1.3" fill="none"/></svg>
<svg class="s" style="left:558px;top:2250px;" width="22" height="22" viewBox="0 0 22 22"><circle cx="5" cy="17" r="3.5" stroke="#3a6ea8" stroke-width="1.5" fill="none"/><circle cx="17" cy="17" r="3.5" stroke="#3a6ea8" stroke-width="1.5" fill="none"/><path d="M7 14 L16 1 M15 14 L6 1" stroke="#444" stroke-width="1.5"/></svg>
<svg class="s" style="left:560px;top:2286px;" width="22" height="22" viewBox="0 0 22 22"><rect x="1" y="1" width="11" height="14" stroke="#3a6ea8" stroke-width="1.4" fill="none"/><path d="M6 6 H15 L20 11 V21 H6 Z" stroke="#444" stroke-width="1.4" fill="#fff"/></svg>
<svg class="s" style="left:585px;top:2294px;" width="8" height="5" viewBox="0 0 8 5"><path d="M1 1 L4 4 L7 1" stroke="#333" stroke-width="1.3" fill="none"/></svg>
<div style="left:610px;top:2243px;width:1px;height:76px;background:#e6e6e6"></div>
<div style="left:620px;top:2247px;width:189px;height:30px;border:1px solid #d8d8d8;border-radius:5px 0 0 5px;box-sizing:border-box;background:#fff"></div>
<div class="t" style="left:632px;top:2254.5px;font-size:15px;line-height:15px;color:#333;">微软雅黑</div>
<svg class="s" style="left:790px;top:2259px;" width="10" height="6" viewBox="0 0 10 6"><path d="M1 1 L5 5 L9 1" stroke="#666" stroke-width="1.3" fill="none"/></svg>
<div style="left:808px;top:2247px;width:77px;height:30px;border:1px solid #d8d8d8;border-radius:0 5px 5px 0;box-sizing:border-box;background:#fff"></div>
<div class="t" style="left:823px;top:2254.0px;font-size:16px;line-height:16px;color:#333;">10</div>
<svg class="s" style="left:866px;top:2259px;" width="10" height="6" viewBox="0 0 10 6"><path d="M1 1 L5 5 L9 1" stroke="#666" stroke-width="1.3" fill="none"/></svg>
<div class="t" style="left:900px;top:2248.5px;font-size:19px;line-height:19px;color:#333;">A<sup style='font-size:11px;vertical-align:8px'>+</sup></div>
<div class="t" style="left:936px;top:2248.5px;font-size:19px;line-height:19px;color:#333;">A<sup style='font-size:11px;vertical-align:8px'>−</sup></div>
<div class="t" style="left:629px;top:2288.5px;font-size:17px;line-height:17px;color:#333;font-weight:bold">B</div>
<div class="t" style="left:668px;top:2288.5px;font-size:17px;line-height:17px;color:#333;font-style:italic;font-family:'Liberation Serif'">I</div>
<div class="t" style="left:702px;top:2289.0px;font-size:16px;line-height:16px;color:#333;text-decoration:underline">U</div>
<svg class="s" style="left:737px;top:2288px;" width="16" height="17" viewBox="0 0 16 17"><path d="M2 16 L8 2 L14 16 M0 10 H16" stroke="#333" stroke-width="1.4" fill="none"/></svg>
<svg class="s" style="left:772px;top:2288px;" width="17" height="17" viewBox="0 0 17 17"><rect x="1" y="1" width="15" height="15" stroke="#333" stroke-width="1.4" fill="none"/><path d="M8.5 1 V16 M1 8.5 H16" stroke="#333" stroke-width="1.4"/></svg>
<svg class="s" style="left:797px;top:2294px;" width="8" height="5" viewBox="0 0 8 5"><path d="M1 1 L4 4 L7 1" stroke="#333" stroke-width="1.3" fill="none"/></svg>
<svg class="s" style="left:816px;top:2287px;" width="20" height="20" viewBox="0 0 20 20"><path d="M5 12 L11 4 L16 10 L10 15 Z" stroke="#333" stroke-width="1.4" fill="none"/><rect x="1" y="16" width="18" height="4" fill="#f5e400"/></svg>
<svg class="s" style="left:846px;top:2294px;" width="8" height="5" viewBox="0 0 8 5"><path d="M1 1 L4 4 L7 1" stroke="#333" stroke-width="1.3" fill="none"/></svg>
<svg class="s" style="left:866px;top:2287px;" width="20" height="20" viewBox="0 0 20 20"><path d="M4 14 L10 2 L16 14 M6 10 H14" stroke="#333" stroke-width="1.5" fill="none"/><rect x="1" y="16" width="18" height="4" rx="1" fill="#d00000"/></svg>
<svg class="s" style="left:896px;top:2294px;" width="8" height="5" viewBox="0 0 8 5"><path d="M1 1 L4 4 L7 1" stroke="#333" stroke-width="1.3" fill="none"/></svg>
<svg class="s" style="left:917px;top:2287px;" width="20" height="20" viewBox="0 0 20 20"><path d="M3 11 L11 3 L18 10 L11 17 H6 Z M7 7 L14 14" stroke="#333" stroke-width="1.4" fill="none"/><path d="M6 19 H18" stroke="#333" stroke-width="1.3"/></svg>
<svg class="s" style="left:945px;top:2294px;" width="8" height="5" viewBox="0 0 8 5"><path d="M1 1 L4 4 L7 1" stroke="#333" stroke-width="1.3" fill="none"/></svg>
<div style="left:969px;top:2243px;width:1px;height:76px;background:#e6e6e6"></div>
<svg class="s" style="left:983px;top:2255px;" width="20" height="16" viewBox="0 0 20 16"><path d="M2 2 H18 M5 8 H15" stroke="#333" stroke-width="1.6"/></svg>
<div style="left:1015px;top:2250px;width:28px;height:28px;background:#e8e8e8;border-radius:4px"></div>
<svg class="s" style="left:1019px;top:2255px;" width="20" height="16" viewBox="0 0 20 16"><path d="M2 5 H18 M4 11 H16" stroke="#333" stroke-width="1.6"/></svg>
<svg class="s" style="left:1054px;top:2255px;" width="20" height="16" viewBox="0 0 20 16"><path d="M5 8 H15 M2 14 H18" stroke="#333" stroke-width="1.6"/></svg>
<svg class="s" style="left:1087px;top:2254px;" width="20" height="18" viewBox="0 0 20 18"><path d="M2 2 H18 M9 9 H18 M2 16 H18 M7 5 L3 9 L7 13 M3 9 H9" stroke="#3a6ea8" stroke-width="1.5" fill="none"/></svg>
<svg class="s" style="left:1122px;top:2254px;" width="20" height="18" viewBox="0 0 20 18"><path d="M2 2 H18 M9 9 H18 M2 16 H18 M3 5 L7 9 L3 13 M1 9 H7" stroke="#3a6ea8" stroke-width="1.5" fill="none"/></svg>
<svg class="s" style="left:1161px;top:2252px;" width="21" height="22" viewBox="0 0 21 22"><rect x="1" y="1" width="18" height="20" rx="1" stroke="#333" stroke-width="1.5" fill="none"/><path d="M4 6 H15 M4 11 H13 Q16 11 16 14 Q16 17 12 17 M4 16 H8" stroke="#333" stroke-width="1.3" fill="none"/></svg>
<div class="t" style="left:1186px;top:2255.5px;font-size:15px;line-height:15px;color:#333;">换行</div>
<svg class="s" style="left:983px;top:2289px;" width="20" height="16" viewBox="0 0 20 16"><path d="M2 2 H18 M2 8 H12 M2 14 H18" stroke="#333" stroke-width="1.6"/></svg>
<div style="left:1015px;top:2284px;width:28px;height:28px;background:#e8e8e8;border-radius:4px"></div>
<svg class="s" style="left:1019px;top:2289px;" width="20" height="16" viewBox="0 0 20 16"><path d="M2 2 H18 M5 8 H15 M2 14 H18" stroke="#333" stroke-width="1.6"/></svg>
<svg class="s" style="left:1054px;top:2289px;" width="20" height="16" viewBox="0 0 20 16"><path d="M2 2 H18 M8 8 H18 M2 14 H18" stroke="#333" stroke-width="1.6"/></svg>
<svg class="s" style="left:1087px;top:2289px;" width="20" height="16" viewBox="0 0 20 16"><path d="M2 2 H18 M2 8 H18 M2 14 H18" stroke="#333" stroke-width="1.6"/></svg>
<svg class="s" style="left:1122px;top:2287px;" width="20" height="20" viewBox="0 0 20 20"><path d="M1 1 V19 M19 1 V19 M5 4 H15 M5 10 H15 M5 16 H15" stroke="#333" stroke-width="1.4" fill="none"/></svg>
<svg class="s" style="left:1161px;top:2287px;" width="21" height="20" viewBox="0 0 21 20"><rect x="1" y="1" width="19" height="18" rx="1" stroke="#333" stroke-width="1.5" fill="none"/><path d="M1 8 H20 M1 13 H20 M7 1 V8 M14 1 V8 M7 13 V19 M14 13 V19" stroke="#333" stroke-width="1.3"/></svg>
<div class="t" style="left:1186px;top:2289.5px;font-size:15px;line-height:15px;color:#333;">合并</div>
<svg class="s" style="left:1220px;top:2294px;" width="8" height="5" viewBox="0 0 8 5"><path d="M1 1 L4 4 L7 1" stroke="#333" stroke-width="1.3" fill="none"/></svg>
<div style="left:1247px;top:2243px;width:1px;height:76px;background:#e6e6e6"></div>
<div style="left:1257px;top:2247px;width:99px;height:29px;border:1px solid #d8d8d8;border-radius:5px;box-sizing:border-box;background:#fff"></div>
<div class="t" style="left:1268px;top:2254.5px;font-size:15px;line-height:15px;color:#333;">常规</div>
<svg class="s" style="left:1338px;top:2259px;" width="10" height="6" viewBox="0 0 10 6"><path d="M1 1 L5 5 L9 1" stroke="#666" stroke-width="1.3" fill="none"/></svg>
<svg class="s" style="left:1367px;top:2251px;" width="22" height="22" viewBox="0 0 22 22"><path d="M4 7 V19 H18 M18 15 V3 H4 M1 10 L4 7 L7 10 M15 6 L18 3 L21 6" stroke="#333" stroke-width="1.5" fill="none"/></svg>
<div class="t" style="left:1395px;top:2255.5px;font-size:15px;line-height:15px;color:#333;">转换</div>
<svg class="s" style="left:1429px;top:2260px;" width="8" height="5" viewBox="0 0 8 5"><path d="M1 1 L4 4 L7 1" stroke="#333" stroke-width="1.3" fill="none"/></svg>
<div class="t" style="left:1266px;top:2288.5px;font-size:17px;line-height:17px;color:#333;">¥</div>
<svg class="s" style="left:1288px;top:2294px;" width="8" height="5" viewBox="0 0 8 5"><path d="M1 1 L4 4 L7 1" stroke="#333" stroke-width="1.3" fill="none"/></svg>
<div class="t" style="left:1318px;top:2289.0px;font-size:18px;line-height:18px;color:#333;">%</div>
<div class="t" style="left:1350px;top:2284.5px;font-size:11px;line-height:11px;color:#333;">000</div>
<div class="t" style="left:1382px;top:2285.0px;font-size:10px;line-height:10px;color:#333;">←0</div>
<div class="t" style="left:1382px;top:2297.0px;font-size:10px;line-height:10px;color:#333;">.00</div>
<div class="t" style="left:1417px;top:2285.0px;font-size:10px;line-height:10px;color:#333;">.00</div>
<div class="t" style="left:1417px;top:2297.0px;font-size:10px;line-height:10px;color:#333;">→0</div>
<div style="left:1456px;top:2243px;width:1px;height:76px;background:#e6e6e6"></div>
<svg class="s" style="left:1472px;top:2252px;" width="21" height="22" viewBox="0 0 21 22"><rect x="1" y="1" width="6" height="6" stroke="#333" stroke-width="1.3" fill="none"/><rect x="10" y="1" width="6" height="6" stroke="#333" stroke-width="1.3" fill="none"/><rect x="1" y="10" width="6" height="6" stroke="#333" stroke-width="1.3" fill="none"/><path d="M16 4 H20" stroke="#333" stroke-width="1.3"/></svg>
<div class="t" style="left:1497px;top:2255.5px;font-size:15px;line-height:15px;color:#333;">行和列</div>
<svg class="s" style="left:1547px;top:2260px;" width="8" height="5" viewBox="0 0 8 5"><path d="M1 1 L4 4 L7 1" stroke="#333" stroke-width="1.3" fill="none"/></svg>
<svg class="s" style="left:1472px;top:2286px;" width="21" height="22" viewBox="0 0 21 22"><rect x="1" y="1" width="19" height="17" stroke="#333" stroke-width="1.4" fill="none"/><path d="M1 6 H20 M7 1 V18" stroke="#333" stroke-width="1.3"/><path d="M3 20 H10" stroke="#1f9d68" stroke-width="2"/></svg>
<div class="t" style="left:1497px;top:2289.5px;font-size:15px;line-height:15px;color:#333;">工作表</div>
<svg class="s" style="left:1547px;top:2294px;" width="8" height="5" viewBox="0 0 8 5"><path d="M1 1 L4 4 L7 1" stroke="#333" stroke-width="1.3" fill="none"/></svg>
<div style="left:1572px;top:2243px;width:1px;height:76px;background:#e6e6e6"></div>
<svg class="s" style="left:1612px;top:2252px;" width="25" height="27" viewBox="0 0 25 27"><rect x="1" y="1" width="23" height="25" rx="1" stroke="#333" stroke-width="1.4" fill="none"/><path d="M1 7 H24 M1 20 H24 M7 1 V26" stroke="#333" stroke-width="1.3"/><rect x="10" y="10" width="10" height="7" stroke="#333" stroke-width="1.3" fill="none"/></svg>
<div class="t" style="left:1588px;top:2290.5px;font-size:15px;line-height:15px;color:#333;">条件格式</div>
<svg class="s" style="left:1652px;top:2294px;" width="8" height="5" viewBox="0 0 8 5"><path d="M1 1 L4 4 L7 1" stroke="#333" stroke-width="1.3" fill="none"/></svg>
<svg class="s" style="left:1673px;top:2252px;" width="22" height="22" viewBox="0 0 22 22"><rect x="1" y="1" width="12" height="12" stroke="#333" stroke-width="1.3" fill="none"/><path d="M1 6 H13 M6 1 V13" stroke="#333" stroke-width="1.2"/><path d="M9 20 L20 8" stroke="#d67a2a" stroke-width="3"/></svg>
<svg class="s" style="left:1700px;top:2260px;" width="8" height="5" viewBox="0 0 8 5"><path d="M1 1 L4 4 L7 1" stroke="#333" stroke-width="1.3" fill="none"/></svg>
<svg class="s" style="left:1673px;top:2287px;" width="22" height="22" viewBox="0 0 22 22"><path d="M5 1 V21 M17 1 V21 M1 5 H21 M1 17 H21" stroke="#333" stroke-width="1.5"/></svg>
<svg class="s" style="left:1700px;top:2294px;" width="8" height="5" viewBox="0 0 8 5"><path d="M1 1 L4 4 L7 1" stroke="#333" stroke-width="1.3" fill="none"/></svg>
<div style="left:1725px;top:2243px;width:1px;height:76px;background:#e6e6e6"></div>
<svg class="s" style="left:1742px;top:2252px;" width="21" height="21" viewBox="0 0 21 21"><rect x="1" y="1" width="19" height="19" rx="1" stroke="#333" stroke-width="1.4" fill="none"/><path d="M1 6 H20 M10.5 8 V16 M7 12 L10.5 16 L14 12" stroke="#333" stroke-width="1.4" fill="none"/></svg>
<div class="t" style="left:1768px;top:2255.5px;font-size:15px;line-height:15px;color:#333;">填充</div>
<svg class="s" style="left:1802px;top:2260px;" width="8" height="5" viewBox="0 0 8 5"><path d="M1 1 L4 4 L7 1" stroke="#333" stroke-width="1.3" fill="none"/></svg>
<svg class="s" style="left:1826px;top:2252px;" width="22" height="21" viewBox="0 0 22 21"><path d="M1 19 L6 2 L11 19 M3 13 H9" stroke="#333" stroke-width="1.4" fill="none"/><path d="M16 2 V19 M12 15 L16 19 L20 15" stroke="#3a6ea8" stroke-width="1.5" fill="none"/></svg>
<div class="t" style="left:1852px;top:2255.5px;font-size:15px;line-height:15px;color:#333;">排序</div>
<svg class="s" style="left:1887px;top:2260px;" width="8" height="5" viewBox="0 0 8 5"><path d="M1 1 L4 4 L7 1" stroke="#333" stroke-width="1.3" fill="none"/></svg>
<svg class="s" style="left:1911px;top:2252px;" width="21" height="21" viewBox="0 0 21 21"><rect x="1" y="1" width="19" height="19" stroke="#333" stroke-width="1.4" fill="none"/><path d="M8 1 V20 M1 8 H20" stroke="#333" stroke-width="1.4"/><rect x="1" y="1" width="7" height="7" fill="#1f9d68" opacity="0.5"/></svg>
<div class="t" style="left:1937px;top:2255.5px;font-size:15px;line-height:15px;color:#333;">冻结</div>
<svg class="s" style="left:1972px;top:2260px;" width="8" height="5" viewBox="0 0 8 5"><path d="M1 1 L4 4 L7 1" stroke="#333" stroke-width="1.3" fill="none"/></svg>
<svg class="s" style="left:1743px;top:2287px;" width="18" height="20" viewBox="0 0 18 20"><path d="M17 1 H1 L9 10 L1 19 H17" stroke="#333" stroke-width="1.5" fill="none"/></svg>
<div class="t" style="left:1768px;top:2289.5px;font-size:15px;line-height:15px;color:#333;">求和</div>
<svg class="s" style="left:1802px;top:2294px;" width="8" height="5" viewBox="0 0 8 5"><path d="M1 1 L4 4 L7 1" stroke="#333" stroke-width="1.3" fill="none"/></svg>
<div style="left:1821px;top:2283px;width:81px;height:29px;background:#ededed;border-radius:4px;box-shadow:inset 0 0 0 1px #dedede"></div>
<svg class="s" style="left:1828px;top:2288px;" width="20" height="20" viewBox="0 0 20 20"><path d="M1 1 H19 L12 9 V18 L8 16 V9 Z" stroke="#333" stroke-width="1.5" fill="none"/></svg>
<div class="t" style="left:1852px;top:2289.5px;font-size:15px;line-height:15px;color:#333;">筛选</div>
<svg class="s" style="left:1887px;top:2294px;" width="8" height="5" viewBox="0 0 8 5"><path d="M1 1 L4 4 L7 1" stroke="#333" stroke-width="1.3" fill="none"/></svg>
<svg class="s" style="left:1912px;top:2287px;" width="20" height="20" viewBox="0 0 20 20"><circle cx="8" cy="8" r="6.5" stroke="#333" stroke-width="1.6" fill="none"/><path d="M13 13 L19 19" stroke="#333" stroke-width="1.8"/></svg>
<div class="t" style="left:1937px;top:2289.5px;font-size:15px;line-height:15px;color:#333;">查找</div>
<svg class="s" style="left:1972px;top:2294px;" width="8" height="5" viewBox="0 0 8 5"><path d="M1 1 L4 4 L7 1" stroke="#333" stroke-width="1.3" fill="none"/></svg>
<div style="left:1997px;top:2243px;width:1px;height:76px;background:#e6e6e6"></div>
<svg class="s" style="left:2052px;top:2252px;" width="26" height="22" viewBox="0 0 26 22"><path d="M6 18 Q1 18 1 13 Q1 8 6 8 Q8 2 14 2 Q21 2 22 9 Q25 10 25 14 Q25 18 20 18" stroke="#3a6ea8" stroke-width="1.6" fill="none"/><circle cx="12" cy="14" r="3.5" stroke="#e0444a" stroke-width="1.5" fill="none"/><circle cx="17" cy="14" r="3.5" stroke="#3a6ea8" stroke-width="1.5" fill="none"/></svg>
<div class="t" style="left:2013px;top:2290.5px;font-size:15px;line-height:15px;color:#333;">保存到天翼云盘</div>
<div style="left:16px;top:2336px;width:201px;height:34px;background:#fff;border-radius:6px"></div>
<div class="t" style="left:54.0px;width:100px;text-align:center;top:2344.5px;font-size:17px;line-height:17px;color:#333;font-family:'Liberation Serif'">E25</div>
<svg class="s" style="left:196px;top:2350px;" width="12" height="7" viewBox="0 0 12 7"><path d="M1 1 L6 6 L11 1" stroke="#666" stroke-width="1.4" fill="none"/></svg>
<div style="left:229px;top:2336px;width:2315px;height:34px;background:#fff;border-radius:6px"></div>
<svg class="s" style="left:258px;top:2343px;" width="20" height="20" viewBox="0 0 20 20"><circle cx="8.5" cy="8.5" r="7" stroke="#444" stroke-width="1.5" fill="none"/><path d="M5 8.5 H12 M14 14 L19 19" stroke="#444" stroke-width="1.5"/></svg>
<div class="t" style="left:296px;top:2343.5px;font-size:19px;line-height:19px;color:#333;font-family:'Liberation Serif';font-style:italic">fx</div>
<div style="left:330px;top:2343px;width:1px;height:20px;background:#dcdcdc"></div>
<div style="left:0px;top:2375px;width:2560px;height:31px;background:#efefef;border-bottom:1px solid #d6d6d6;box-sizing:border-box"></div>
<div style="left:43px;top:2406px;width:2496px;height:1055px;background:#fff"></div>
<div style="left:0px;top:2406px;width:43px;height:1055px;background:#efefef;border-right:1px solid #d6d6d6;box-sizing:border-box"></div>
<svg class="s" style="left:11px;top:2384px;" width="14" height="14" viewBox="0 0 14 14"><path d="M13 2 V13 H2 Z" fill="#555"/></svg>
<div style="left:667px;top:2375px;width:52px;height:31px;background:#dcdcdc"></div>
<div style="left:667px;top:2403px;width:52px;height:3px;background:#1b8a63"></div>
<div style="left:132px;top:2379px;width:1px;height:27px;background:#dadada"></div>
<div class="t" style="left:47.5px;width:80px;text-align:center;top:2382.0px;font-size:18px;line-height:18px;color:#444;">A</div>
<div style="left:251px;top:2379px;width:1px;height:27px;background:#dadada"></div>
<div class="t" style="left:151.5px;width:80px;text-align:center;top:2382.0px;font-size:18px;line-height:18px;color:#444;">B</div>
<div style="left:563px;top:2379px;width:1px;height:27px;background:#dadada"></div>
<div class="t" style="left:367.0px;width:80px;text-align:center;top:2382.0px;font-size:18px;line-height:18px;color:#444;">C</div>
<div style="left:667px;top:2379px;width:1px;height:27px;background:#dadada"></div>
<div class="t" style="left:575.0px;width:80px;text-align:center;top:2382.0px;font-size:18px;line-height:18px;color:#444;">D</div>
<div style="left:719px;top:2379px;width:1px;height:27px;background:#dadada"></div>
<div class="t" style="left:653.0px;width:80px;text-align:center;top:2382.0px;font-size:18px;line-height:18px;color:#1b7c58;">E</div>
<div style="left:833px;top:2379px;width:1px;height:27px;background:#dadada"></div>
<div class="t" style="left:736.0px;width:80px;text-align:center;top:2382.0px;font-size:18px;line-height:18px;color:#444;">F</div>
<div style="left:922px;top:2379px;width:1px;height:27px;background:#dadada"></div>
<div class="t" style="left:837.5px;width:80px;text-align:center;top:2382.0px;font-size:18px;line-height:18px;color:#444;">G</div>
<div style="left:1011px;top:2379px;width:1px;height:27px;background:#dadada"></div>
<div class="t" style="left:926.5px;width:80px;text-align:center;top:2382.0px;font-size:18px;line-height:18px;color:#444;">H</div>
<div style="left:1082px;top:2379px;width:1px;height:27px;background:#dadada"></div>
<div class="t" style="left:1006.5px;width:80px;text-align:center;top:2382.0px;font-size:18px;line-height:18px;color:#444;">I</div>
<div style="left:1153px;top:2379px;width:1px;height:27px;background:#dadada"></div>
<div class="t" style="left:1077.5px;width:80px;text-align:center;top:2382.0px;font-size:18px;line-height:18px;color:#444;">J</div>
<div style="left:1221px;top:2379px;width:1px;height:27px;background:#dadada"></div>
<div class="t" style="left:1147.0px;width:80px;text-align:center;top:2382.0px;font-size:18px;line-height:18px;color:#444;">K</div>
<div style="left:1278px;top:2379px;width:1px;height:27px;background:#dadada"></div>
<div class="t" style="left:1209.5px;width:80px;text-align:center;top:2382.0px;font-size:18px;line-height:18px;color:#444;">L</div>
<div style="left:1367.1px;top:2379px;width:1px;height:27px;background:#dadada"></div>
<div class="t" style="left:1282.5px;width:80px;text-align:center;top:2382.0px;font-size:18px;line-height:18px;color:#444;">M</div>
<div style="left:1456.1px;top:2379px;width:1px;height:27px;background:#dadada"></div>
<div class="t" style="left:1371.6px;width:80px;text-align:center;top:2382.0px;font-size:18px;line-height:18px;color:#444;">N</div>
<div style="left:1545.2px;top:2379px;width:1px;height:27px;background:#dadada"></div>
<div class="t" style="left:1460.7px;width:80px;text-align:center;top:2382.0px;font-size:18px;line-height:18px;color:#444;">O</div>
<div style="left:1634.3px;top:2379px;width:1px;height:27px;background:#dadada"></div>
<div class="t" style="left:1549.8px;width:80px;text-align:center;top:2382.0px;font-size:18px;line-height:18px;color:#444;">P</div>
<div style="left:1723.3px;top:2379px;width:1px;height:27px;background:#dadada"></div>
<div class="t" style="left:1638.8px;width:80px;text-align:center;top:2382.0px;font-size:18px;line-height:18px;color:#444;">Q</div>
<div style="left:1812.4px;top:2379px;width:1px;height:27px;background:#dadada"></div>
<div class="t" style="left:1727.8px;width:80px;text-align:center;top:2382.0px;font-size:18px;line-height:18px;color:#444;">R</div>
<div style="left:1901.5px;top:2379px;width:1px;height:27px;background:#dadada"></div>
<div class="t" style="left:1817.0px;width:80px;text-align:center;top:2382.0px;font-size:18px;line-height:18px;color:#444;">S</div>
<div style="left:1990.6px;top:2379px;width:1px;height:27px;background:#dadada"></div>
<div class="t" style="left:1906.0px;width:80px;text-align:center;top:2382.0px;font-size:18px;line-height:18px;color:#444;">T</div>
<div style="left:2079.6px;top:2379px;width:1px;height:27px;background:#dadada"></div>
<div class="t" style="left:1995.1px;width:80px;text-align:center;top:2382.0px;font-size:18px;line-height:18px;color:#444;">U</div>
<div style="left:2168.7px;top:2379px;width:1px;height:27px;background:#dadada"></div>
<div class="t" style="left:2084.1px;width:80px;text-align:center;top:2382.0px;font-size:18px;line-height:18px;color:#444;">V</div>
<div style="left:2257.8px;top:2379px;width:1px;height:27px;background:#dadada"></div>
<div class="t" style="left:2173.2px;width:80px;text-align:center;top:2382.0px;font-size:18px;line-height:18px;color:#444;">W</div>
<div style="left:2346.8px;top:2379px;width:1px;height:27px;background:#dadada"></div>
<div class="t" style="left:2262.3px;width:80px;text-align:center;top:2382.0px;font-size:18px;line-height:18px;color:#444;">X</div>
<div style="left:2435.9px;top:2379px;width:1px;height:27px;background:#dadada"></div>
<div class="t" style="left:2351.4px;width:80px;text-align:center;top:2382.0px;font-size:18px;line-height:18px;color:#444;">Y</div>
<div style="left:2525.0px;top:2379px;width:1px;height:27px;background:#dadada"></div>
<div class="t" style="left:2440.4px;width:80px;text-align:center;top:2382.0px;font-size:18px;line-height:18px;color:#444;">Z</div>
<div style="left:132px;top:2406px;width:1px;height:1055px;background:#e2e2e2"></div>
<div style="left:251px;top:2406px;width:1px;height:1055px;background:#e2e2e2"></div>
<div style="left:563px;top:2406px;width:1px;height:1055px;background:#e2e2e2"></div>
<div style="left:667px;top:2406px;width:1px;height:1055px;background:#e2e2e2"></div>
<div style="left:719px;top:2406px;width:1px;height:1055px;background:#e2e2e2"></div>
<div style="left:833px;top:2406px;width:1px;height:1055px;background:#e2e2e2"></div>
<div style="left:922px;top:2406px;width:1px;height:1055px;background:#e2e2e2"></div>
<div style="left:1011px;top:2406px;width:1px;height:1055px;background:#e2e2e2"></div>
<div style="left:1082px;top:2406px;width:1px;height:1055px;background:#e2e2e2"></div>
<div style="left:1153px;top:2406px;width:1px;height:1055px;background:#e2e2e2"></div>
<div style="left:1221px;top:2406px;width:1px;height:1055px;background:#e2e2e2"></div>
<div style="left:1278px;top:2406px;width:1px;height:1055px;background:#e2e2e2"></div>
<div style="left:1367.1px;top:2406px;width:1px;height:1055px;background:#e2e2e2"></div>
<div style="left:1456.1px;top:2406px;width:1px;height:1055px;background:#e2e2e2"></div>
<div style="left:1545.2px;top:2406px;width:1px;height:1055px;background:#e2e2e2"></div>
<div style="left:1634.3px;top:2406px;width:1px;height:1055px;background:#e2e2e2"></div>
<div style="left:1723.3px;top:2406px;width:1px;height:1055px;background:#e2e2e2"></div>
<div style="left:1812.4px;top:2406px;width:1px;height:1055px;background:#e2e2e2"></div>
<div style="left:1901.5px;top:2406px;width:1px;height:1055px;background:#e2e2e2"></div>
<div style="left:1990.6px;top:2406px;width:1px;height:1055px;background:#e2e2e2"></div>
<div style="left:2079.6px;top:2406px;width:1px;height:1055px;background:#e2e2e2"></div>
<div style="left:2168.7px;top:2406px;width:1px;height:1055px;background:#e2e2e2"></div>
<div style="left:2257.8px;top:2406px;width:1px;height:1055px;background:#e2e2e2"></div>
<div style="left:2346.8px;top:2406px;width:1px;height:1055px;background:#e2e2e2"></div>
<div style="left:2435.9px;top:2406px;width:1px;height:1055px;background:#e2e2e2"></div>
<div style="left:2525.0px;top:2406px;width:1px;height:1055px;background:#e2e2e2"></div>
<div style="left:0px;top:2441px;width:2539px;height:1px;background:#e2e2e2"></div>
<div class="t" style="left:0.0px;width:43px;text-align:center;top:2415.0px;font-size:18px;line-height:18px;color:#555;">1</div>
<div style="left:0px;top:2477px;width:2539px;height:1px;background:#e2e2e2"></div>
<div class="t" style="left:0.0px;width:43px;text-align:center;top:2452.5px;font-size:18px;line-height:18px;color:#555;">20</div>
<div style="left:0px;top:2513px;width:2539px;height:1px;background:#e2e2e2"></div>
<div class="t" style="left:0.0px;width:43px;text-align:center;top:2487.0px;font-size:18px;line-height:18px;color:#555;">21</div>
<div style="left:0px;top:2549px;width:2539px;height:1px;background:#e2e2e2"></div>
<div class="t" style="left:0.0px;width:43px;text-align:center;top:2523.0px;font-size:18px;line-height:18px;color:#555;">22</div>
<div style="left:0px;top:2585px;width:2539px;height:1px;background:#e2e2e2"></div>
<div class="t" style="left:0.0px;width:43px;text-align:center;top:2559.0px;font-size:18px;line-height:18px;color:#555;">23</div>
<div style="left:0px;top:2621px;width:2539px;height:1px;background:#e2e2e2"></div>
<div class="t" style="left:0.0px;width:43px;text-align:center;top:2595.0px;font-size:18px;line-height:18px;color:#555;">24</div>
<div style="left:0px;top:2657px;width:2539px;height:1px;background:#e2e2e2"></div>
<div class="t" style="left:0.0px;width:43px;text-align:center;top:2631.0px;font-size:18px;line-height:18px;color:#1b7c58;">25</div>
<div style="left:0px;top:2693px;width:2539px;height:1px;background:#e2e2e2"></div>
<div class="t" style="left:0.0px;width:43px;text-align:center;top:2667.0px;font-size:18px;line-height:18px;color:#555;">26</div>
<div style="left:0px;top:2729px;width:2539px;height:1px;background:#e2e2e2"></div>
<div class="t" style="left:0.0px;width:43px;text-align:center;top:2703.0px;font-size:18px;line-height:18px;color:#555;">27</div>
<div style="left:0px;top:2765px;width:2539px;height:1px;background:#e2e2e2"></div>
<div class="t" style="left:0.0px;width:43px;text-align:center;top:2739.0px;font-size:18px;line-height:18px;color:#555;">28</div>
<div style="left:0px;top:2801px;width:2539px;height:1px;background:#e2e2e2"></div>
<div class="t" style="left:0.0px;width:43px;text-align:center;top:2775.0px;font-size:18px;line-height:18px;color:#555;">29</div>
<div style="left:0px;top:2837px;width:2539px;height:1px;background:#e2e2e2"></div>
<div class="t" style="left:0.0px;width:43px;text-align:center;top:2811.0px;font-size:18px;line-height:18px;color:#555;">30</div>
<div style="left:0px;top:2873px;width:2539px;height:1px;background:#e2e2e2"></div>
<div class="t" style="left:0.0px;width:43px;text-align:center;top:2847.0px;font-size:18px;line-height:18px;color:#555;">31</div>
<div style="left:0px;top:2909px;width:2539px;height:1px;background:#e2e2e2"></div>
<div class="t" style="left:0.0px;width:43px;text-align:center;top:2883.0px;font-size:18px;line-height:18px;color:#555;">32</div>
<div style="left:0px;top:2945px;width:2539px;height:1px;background:#e2e2e2"></div>
<div class="t" style="left:0.0px;width:43px;text-align:center;top:2919.0px;font-size:18px;line-height:18px;color:#555;">33</div>
<div style="left:0px;top:2981px;width:2539px;height:1px;background:#e2e2e2"></div>
<div class="t" style="left:0.0px;width:43px;text-align:center;top:2955.0px;font-size:18px;line-height:18px;color:#555;">34</div>
<div style="left:0px;top:3017px;width:2539px;height:1px;background:#e2e2e2"></div>
<div class="t" style="left:0.0px;width:43px;text-align:center;top:2991.0px;font-size:18px;line-height:18px;color:#555;">35</div>
<div style="left:0px;top:3053px;width:2539px;height:1px;background:#e2e2e2"></div>
<div class="t" style="left:0.0px;width:43px;text-align:center;top:3027.0px;font-size:18px;line-height:18px;color:#555;">36</div>
<div style="left:0px;top:3089px;width:2539px;height:1px;background:#e2e2e2"></div>
<div class="t" style="left:0.0px;width:43px;text-align:center;top:3063.0px;font-size:18px;line-height:18px;color:#555;">37</div>
<div style="left:0px;top:3125px;width:2539px;height:1px;background:#e2e2e2"></div>
<div class="t" style="left:0.0px;width:43px;text-align:center;top:3099.0px;font-size:18px;line-height:18px;color:#555;">38</div>
<div style="left:0px;top:3161px;width:2539px;height:1px;background:#e2e2e2"></div>
<div class="t" style="left:0.0px;width:43px;text-align:center;top:3135.0px;font-size:18px;line-height:18px;color:#555;">39</div>
<div style="left:0px;top:3197px;width:2539px;height:1px;background:#e2e2e2"></div>
<div class="t" style="left:0.0px;width:43px;text-align:center;top:3171.0px;font-size:18px;line-height:18px;color:#555;">40</div>
<div style="left:0px;top:3233px;width:2539px;height:1px;background:#e2e2e2"></div>
<div class="t" style="left:0.0px;width:43px;text-align:center;top:3207.0px;font-size:18px;line-height:18px;color:#555;">41</div>
<div style="left:0px;top:3269px;width:2539px;height:1px;background:#e2e2e2"></div>
<div class="t" style="left:0.0px;width:43px;text-align:center;top:3243.0px;font-size:18px;line-height:18px;color:#555;">42</div>
<div style="left:0px;top:3305px;width:2539px;height:1px;background:#e2e2e2"></div>
<div class="t" style="left:0.0px;width:43px;text-align:center;top:3279.0px;font-size:18px;line-height:18px;color:#555;">43</div>
<div style="left:0px;top:3341px;width:2539px;height:1px;background:#e2e2e2"></div>
<div class="t" style="left:0.0px;width:43px;text-align:center;top:3315.0px;font-size:18px;line-height:18px;color:#555;">44</div>
<div style="left:0px;top:3377px;width:2539px;height:1px;background:#e2e2e2"></div>
<div class="t" style="left:0.0px;width:43px;text-align:center;top:3351.0px;font-size:18px;line-height:18px;color:#555;">45</div>
<div style="left:0px;top:3413px;width:2539px;height:1px;background:#e2e2e2"></div>
<div class="t" style="left:0.0px;width:43px;text-align:center;top:3387.0px;font-size:18px;line-height:18px;color:#555;">46</div>
<div style="left:0px;top:3449px;width:2539px;height:1px;background:#e2e2e2"></div>
<div class="t" style="left:0.0px;width:43px;text-align:center;top:3423.0px;font-size:18px;line-height:18px;color:#555;">47</div>
<div style="left:0px;top:3460px;width:2539px;height:1px;background:#e2e2e2"></div>
<div style="left:0px;top:2442px;width:2539px;height:3px;background:#c4c4c4"></div>
<div style="left:0px;top:2622px;width:43px;height:36px;background:#dcdcdc"></div>
<div style="left:40px;top:2622px;width:3px;height:36px;background:#1b8a63"></div>
<div class="t" style="left:0.0px;width:43px;text-align:center;top:2631.0px;font-size:18px;line-height:18px;color:#1b7c58;">25</div>
<div style="left:131px;top:2406px;width:2.5px;height:1055px;background:#111"></div>
<div style="left:1276.5px;top:2406px;width:2.5px;height:1055px;background:#111"></div>
<div class="t" style="left:-281.0px;width:400px;text-align:right;top:2414.5px;font-size:19px;line-height:19px;color:#222;">123.00</div>
<div class="t" style="left:141.5px;width:100px;text-align:center;top:2415.5px;font-size:19px;line-height:19px;color:#222;">日期</div>
<div style="left:234px;top:2425px;width:15px;height:16px;background:#fff;border:1px solid #d6d6d6;box-sizing:border-box"></div>
<svg class="s" style="left:237px;top:2430px;" width="9" height="6" viewBox="0 0 9 6"><path d="M0 0 H9 L4.5 5 Z" fill="#1b8a63"/></svg>
<div class="t" style="left:357.0px;width:100px;text-align:center;top:2415.5px;font-size:19px;line-height:19px;color:#222;">内容</div>
<div style="left:546px;top:2425px;width:15px;height:16px;background:#fff;border:1px solid #d6d6d6;box-sizing:border-box"></div>
<svg class="s" style="left:549px;top:2430px;" width="9" height="6" viewBox="0 0 9 6"><path d="M0 0 H9 L4.5 5 Z" fill="#1b8a63"/></svg>
<div class="t" style="left:565.0px;width:100px;text-align:center;top:2415.5px;font-size:19px;line-height:19px;color:#222;">金额</div>
<div style="left:650px;top:2425px;width:15px;height:16px;background:#fff;border:1px solid #d6d6d6;box-sizing:border-box"></div>
<svg class="s" style="left:653px;top:2430px;" width="9" height="6" viewBox="0 0 9 6"><path d="M0 0 H9 L4.5 5 Z" fill="#1b8a63"/></svg>
<div class="t" style="left:676px;top:2415.5px;font-size:19px;line-height:19px;color:#222;">成尸</div>
<div style="left:702px;top:2425px;width:15px;height:16px;background:#fff;border:1px solid #d6d6d6;box-sizing:border-box"></div>
<svg class="s" style="left:705px;top:2430px;" width="9" height="6" viewBox="0 0 9 6"><path d="M0 0 H9 L4.5 5 Z" fill="#1b8a63"/></svg>
<div class="t" style="left:726.0px;width:100px;text-align:center;top:2415.5px;font-size:19px;line-height:19px;color:#222;">Ⅲ</div>
<div style="left:816px;top:2425px;width:15px;height:16px;background:#fff;border:1px solid #d6d6d6;box-sizing:border-box"></div>
<svg class="s" style="left:819px;top:2430px;" width="9" height="6" viewBox="0 0 9 6"><path d="M0 0 H9 L4.5 5 Z" fill="#1b8a63"/></svg>
<div class="t" style="left:827.5px;width:100px;text-align:center;top:2415.5px;font-size:19px;line-height:19px;color:#222;">Ⅱ</div>
<div style="left:905px;top:2425px;width:15px;height:16px;background:#fff;border:1px solid #d6d6d6;box-sizing:border-box"></div>
<svg class="s" style="left:908px;top:2430px;" width="9" height="6" viewBox="0 0 9 6"><path d="M0 0 H9 L4.5 5 Z" fill="#1b8a63"/></svg>
<div class="t" style="left:916.5px;width:100px;text-align:center;top:2415.5px;font-size:19px;line-height:19px;color:#222;">Ⅰ</div>
<div style="left:994px;top:2425px;width:15px;height:16px;background:#fff;border:1px solid #d6d6d6;box-sizing:border-box"></div>
<svg class="s" style="left:997px;top:2430px;" width="9" height="6" viewBox="0 0 9 6"><path d="M0 0 H9 L4.5 5 Z" fill="#1b8a63"/></svg>
<div class="t" style="left:996.5px;width:100px;text-align:center;top:2415.5px;font-size:19px;line-height:19px;color:#222;">年度</div>
<div style="left:1065px;top:2425px;width:15px;height:16px;background:#fff;border:1px solid #d6d6d6;box-sizing:border-box"></div>
<svg class="s" style="left:1068px;top:2430px;" width="9" height="6" viewBox="0 0 9 6"><path d="M0 0 H9 L4.5 5 Z" fill="#1b8a63"/></svg>
<div class="t" style="left:1067.5px;width:100px;text-align:center;top:2415.5px;font-size:19px;line-height:19px;color:#222;">月度</div>
<div style="left:1136px;top:2425px;width:15px;height:16px;background:#fff;border:1px solid #d6d6d6;box-sizing:border-box"></div>
<svg class="s" style="left:1139px;top:2430px;" width="9" height="6" viewBox="0 0 9 6"><path d="M0 0 H9 L4.5 5 Z" fill="#1b8a63"/></svg>
<div class="t" style="left:1161px;top:2415.5px;font-size:19px;line-height:19px;color:#222;">对账</div>
<div style="left:1204px;top:2425px;width:15px;height:16px;background:#fff;border:1px solid #d6d6d6;box-sizing:border-box"></div>
<svg class="s" style="left:1207px;top:2430px;" width="9" height="6" viewBox="0 0 9 6"><path d="M0 0 H9 L4.5 5 Z" fill="#1b8a63"/></svg>
<div class="t" style="left:1229px;top:2415.5px;font-size:19px;line-height:19px;color:#222;">预算</div>
<div style="left:1261px;top:2425px;width:15px;height:16px;background:#fff;border:1px solid #d6d6d6;box-sizing:border-box"></div>
<svg class="s" style="left:1264px;top:2430px;" width="9" height="6" viewBox="0 0 9 6"><path d="M0 0 H9 L4.5 5 Z" fill="#1b8a63"/></svg>
<div class="t" style="left:91.5px;width:200px;text-align:center;top:2450.5px;font-size:19px;line-height:19px;color:#222;">2017/11/20</div>
<div class="t" style="left:307.0px;width:200px;text-align:center;top:2450.5px;font-size:19px;line-height:19px;color:#222;">cloudlet.net</div>
<div class="t" style="left:515.0px;width:200px;text-align:center;top:2450.5px;font-size:19px;line-height:19px;color:#222;">2000.00</div>
<div class="t" style="left:676.0px;width:200px;text-align:center;top:2450.5px;font-size:19px;line-height:19px;color:#222;">域名</div>
<div class="t" style="left:777.5px;width:200px;text-align:center;top:2450.5px;font-size:19px;line-height:19px;color:#222;">其他</div>
<div class="t" style="left:866.5px;width:200px;text-align:center;top:2450.5px;font-size:19px;line-height:19px;color:#222;">支出</div>
<div class="t" style="left:946.5px;width:200px;text-align:center;top:2450.5px;font-size:19px;line-height:19px;color:#222;">17</div>
<div class="t" style="left:1017.5px;width:200px;text-align:center;top:2450.5px;font-size:19px;line-height:19px;color:#222;">11</div>
<div class="t" style="left:91.5px;width:200px;text-align:center;top:2486.5px;font-size:19px;line-height:19px;color:#222;">2017/11/20</div>
<div class="t" style="left:307.0px;width:200px;text-align:center;top:2486.5px;font-size:19px;line-height:19px;color:#222;">cloudlet.org</div>
<div class="t" style="left:515.0px;width:200px;text-align:center;top:2486.5px;font-size:19px;line-height:19px;color:#222;">2000.00</div>
<div class="t" style="left:676.0px;width:200px;text-align:center;top:2486.5px;font-size:19px;line-height:19px;color:#222;">域名</div>
<div class="t" style="left:777.5px;width:200px;text-align:center;top:2486.5px;font-size:19px;line-height:19px;color:#222;">其他</div>
<div class="t" style="left:866.5px;width:200px;text-align:center;top:2486.5px;font-size:19px;line-height:19px;color:#222;">支出</div>
<div class="t" style="left:946.5px;width:200px;text-align:center;top:2486.5px;font-size:19px;line-height:19px;color:#222;">17</div>
<div class="t" style="left:1017.5px;width:200px;text-align:center;top:2486.5px;font-size:19px;line-height:19px;color:#222;">11</div>
<div class="t" style="left:91.5px;width:200px;text-align:center;top:2522.5px;font-size:19px;line-height:19px;color:#222;">2017/11/20</div>
<div class="t" style="left:307.0px;width:200px;text-align:center;top:2522.5px;font-size:19px;line-height:19px;color:#222;">cloudlet.cc</div>
<div class="t" style="left:515.0px;width:200px;text-align:center;top:2522.5px;font-size:19px;line-height:19px;color:#222;">2000.00</div>
<div class="t" style="left:676.0px;width:200px;text-align:center;top:2522.5px;font-size:19px;line-height:19px;color:#222;">域名</div>
<div class="t" style="left:777.5px;width:200px;text-align:center;top:2522.5px;font-size:19px;line-height:19px;color:#222;">其他</div>
<div class="t" style="left:866.5px;width:200px;text-align:center;top:2522.5px;font-size:19px;line-height:19px;color:#222;">支出</div>
<div class="t" style="left:946.5px;width:200px;text-align:center;top:2522.5px;font-size:19px;line-height:19px;color:#222;">17</div>
<div class="t" style="left:1017.5px;width:200px;text-align:center;top:2522.5px;font-size:19px;line-height:19px;color:#222;">11</div>
<div class="t" style="left:515.0px;width:200px;text-align:center;top:2558.5px;font-size:19px;line-height:19px;color:#222;">0.00</div>
<div class="t" style="left:515.0px;width:200px;text-align:center;top:2594.5px;font-size:19px;line-height:19px;color:#222;">123.00</div>
<div class="t" style="left:91.5px;width:200px;text-align:center;top:2810.5px;font-size:19px;line-height:19px;color:#222;">2048/1/1</div>
<div class="t" style="left:515.0px;width:200px;text-align:center;top:2810.5px;font-size:19px;line-height:19px;color:#222;">0.00</div>
<div class="t" style="left:676.0px;width:200px;text-align:center;top:2810.5px;font-size:19px;line-height:19px;color:#222;">工资</div>
<div class="t" style="left:777.5px;width:200px;text-align:center;top:2810.5px;font-size:19px;line-height:19px;color:#222;">/</div>
<div class="t" style="left:866.5px;width:200px;text-align:center;top:2810.5px;font-size:19px;line-height:19px;color:#222;">收入</div>
<div class="t" style="left:946.5px;width:200px;text-align:center;top:2810.5px;font-size:19px;line-height:19px;color:#222;">47</div>
<div class="t" style="left:1017.5px;width:200px;text-align:center;top:2810.5px;font-size:19px;line-height:19px;color:#222;">13</div>
<div class="t" style="left:1149.5px;width:200px;text-align:center;top:2810.5px;font-size:19px;line-height:19px;color:#222;">P</div>
<div class="t" style="left:91.5px;width:200px;text-align:center;top:2846.5px;font-size:19px;line-height:19px;color:#222;">2048/1/1</div>
<div class="t" style="left:515.0px;width:200px;text-align:center;top:2846.5px;font-size:19px;line-height:19px;color:#222;">0.00</div>
<div class="t" style="left:676.0px;width:200px;text-align:center;top:2846.5px;font-size:19px;line-height:19px;color:#222;">现金</div>
<div class="t" style="left:777.5px;width:200px;text-align:center;top:2846.5px;font-size:19px;line-height:19px;color:#222;">/</div>
<div class="t" style="left:866.5px;width:200px;text-align:center;top:2846.5px;font-size:19px;line-height:19px;color:#222;">资产</div>
<div class="t" style="left:946.5px;width:200px;text-align:center;top:2846.5px;font-size:19px;line-height:19px;color:#222;">47</div>
<div class="t" style="left:1017.5px;width:200px;text-align:center;top:2846.5px;font-size:19px;line-height:19px;color:#222;">13</div>
<div class="t" style="left:1149.5px;width:200px;text-align:center;top:2846.5px;font-size:19px;line-height:19px;color:#222;">P</div>
<div class="t" style="left:91.5px;width:200px;text-align:center;top:2882.5px;font-size:19px;line-height:19px;color:#222;">2048/1/2</div>
<div class="t" style="left:307.0px;width:200px;text-align:center;top:2882.5px;font-size:19px;line-height:19px;color:#222;">cloudlet.info</div>
<div class="t" style="left:515.0px;width:200px;text-align:center;top:2882.5px;font-size:19px;line-height:19px;color:#222;">100000.00</div>
<div class="t" style="left:676.0px;width:200px;text-align:center;top:2882.5px;font-size:19px;line-height:19px;color:#222;">域名</div>
<div class="t" style="left:777.5px;width:200px;text-align:center;top:2882.5px;font-size:19px;line-height:19px;color:#222;">其他</div>
<div class="t" style="left:866.5px;width:200px;text-align:center;top:2882.5px;font-size:19px;line-height:19px;color:#222;">支出</div>
<div class="t" style="left:946.5px;width:200px;text-align:center;top:2882.5px;font-size:19px;line-height:19px;color:#222;">47</div>
<div class="t" style="left:1017.5px;width:200px;text-align:center;top:2882.5px;font-size:19px;line-height:19px;color:#222;">13</div>
<div class="t" style="left:1149.5px;width:200px;text-align:center;top:2882.5px;font-size:19px;line-height:19px;color:#222;">P</div>
<div class="t" style="left:91.5px;width:200px;text-align:center;top:2918.5px;font-size:19px;line-height:19px;color:#222;">2048/1/2</div>
<div class="t" style="left:307.0px;width:200px;text-align:center;top:2918.5px;font-size:19px;line-height:19px;color:#222;">cloudlet.info</div>
<div class="t" style="left:515.0px;width:200px;text-align:center;top:2918.5px;font-size:19px;line-height:19px;color:#222;">-100000.00</div>
<div class="t" style="left:676.0px;width:200px;text-align:center;top:2918.5px;font-size:19px;line-height:19px;color:#222;">现金</div>
<div class="t" style="left:777.5px;width:200px;text-align:center;top:2918.5px;font-size:19px;line-height:19px;color:#222;">/</div>
<div class="t" style="left:866.5px;width:200px;text-align:center;top:2918.5px;font-size:19px;line-height:19px;color:#222;">资产</div>
<div class="t" style="left:946.5px;width:200px;text-align:center;top:2918.5px;font-size:19px;line-height:19px;color:#222;">47</div>
<div class="t" style="left:1017.5px;width:200px;text-align:center;top:2918.5px;font-size:19px;line-height:19px;color:#222;">13</div>
<div class="t" style="left:1149.5px;width:200px;text-align:center;top:2918.5px;font-size:19px;line-height:19px;color:#222;">P</div>
<div style="left:666px;top:2621px;width:54px;height:38px;border:2.5px solid #1b8a63;box-sizing:border-box"></div>
<div style="left:717px;top:2656px;width:5px;height:5px;background:#1b8a63;border:1px solid #fff"></div>
<div style="left:2539px;top:2406px;width:21px;height:1055px;background:#e8e8e8"></div>
<div style="left:2544px;top:2414px;width:10px;height:2px;background:#888"></div>
<svg class="s" style="left:2544px;top:2425px;" width="10" height="8" viewBox="0 0 10 8"><path d="M0 8 L5 0 L10 8 Z" fill="#666"/></svg>
<div style="left:2544px;top:2452px;width:10px;height:52px;background:#c8c8c8;border-radius:5px"></div>
<svg class="s" style="left:2544px;top:3443px;" width="10" height="8" viewBox="0 0 10 8"><path d="M0 0 L5 8 L10 0 Z" fill="#666"/></svg>
<div style="left:0px;top:3461px;width:2560px;height:33px;background:#e8e8e8"></div>
<div class="t" style="left:18px;top:3469.0px;font-size:16px;line-height:16px;color:#999;">|&lt;</div>
<div class="t" style="left:47px;top:3469.0px;font-size:16px;line-height:16px;color:#999;">&lt;</div>
<div class="t" style="left:75px;top:3469.0px;font-size:16px;line-height:16px;color:#999;">&gt;</div>
<div class="t" style="left:99px;top:3469.0px;font-size:16px;line-height:16px;color:#999;">&gt;|</div>
<div style="left:225px;top:3462px;width:78px;height:31px;background:#fafafa;border-radius:0 0 6px 6px"></div>
<div class="t" style="left:142px;top:3468.5px;font-size:17px;line-height:17px;color:#333;">Accounts</div>
<div class="t" style="left:239px;top:3468.5px;font-size:17px;line-height:17px;color:#167c5a;font-weight:bold">Ledger</div>
<div class="t" style="left:319px;top:3468.5px;font-size:17px;line-height:17px;color:#333;">Reports</div>
<div class="t" style="left:407px;top:3468.5px;font-size:17px;line-height:17px;color:#333;">Expense</div>
<div class="t" style="left:498px;top:3468.5px;font-size:17px;line-height:17px;color:#333;">Income</div>
<div class="t" style="left:582px;top:3468.5px;font-size:17px;line-height:17px;color:#333;">AssetsFlow</div>
<div class="t" style="left:692px;top:3468.5px;font-size:17px;line-height:17px;color:#333;">Budget</div>
<div class="t" style="left:775px;top:3468.5px;font-size:17px;line-height:17px;color:#333;">Check</div>
<div style="left:390px;top:3469px;width:1px;height:16px;background:#cfcfcf"></div>
<div style="left:481px;top:3469px;width:1px;height:16px;background:#cfcfcf"></div>
<div style="left:566px;top:3469px;width:1px;height:16px;background:#cfcfcf"></div>
<div style="left:676px;top:3469px;width:1px;height:16px;background:#cfcfcf"></div>
<div style="left:759px;top:3469px;width:1px;height:16px;background:#cfcfcf"></div>
<div style="left:833px;top:3469px;width:1px;height:16px;background:#cfcfcf"></div>
<svg class="s" style="left:841px;top:3470px;" width="14" height="14" viewBox="0 0 14 14"><path d="M7 0 V14 M0 7 H14" stroke="#333" stroke-width="2"/></svg>
<div style="left:1516px;top:3469px;width:1px;height:14px;background:#aaa"></div>
<svg class="s" style="left:1533px;top:3473px;" width="7" height="9" viewBox="0 0 7 9"><path d="M7 0 V9 L0 4.5 Z" fill="#777"/></svg>
<div style="left:1552px;top:3472px;width:887px;height:9px;background:#c8c8c8;border-radius:5px"></div>
<svg class="s" style="left:2511px;top:3473px;" width="7" height="9" viewBox="0 0 7 9"><path d="M0 0 V9 L7 4.5 Z" fill="#777"/></svg>
<div style="left:2532px;top:3469px;width:1px;height:14px;background:#aaa"></div>
<svg class="s" style="left:20px;top:3498px;" width="20" height="18" viewBox="0 0 20 18"><path d="M2 2 H8 V8 H2 Z M11 2 H17 M11 6 H17 M5 10 V16 M2 13 H8 M11 10 H17 V16 H11" stroke="#444" stroke-width="1.4" fill="none"/></svg>
<svg class="s" style="left:61px;top:3498px;" width="19" height="18" viewBox="0 0 19 18"><rect x="1" y="1" width="17" height="16" stroke="#444" stroke-width="1.4" fill="none"/><path d="M6 1 V17 M9 6 H15 M9 10 H15 M9 14 H15" stroke="#444" stroke-width="1.3"/></svg>
<svg class="s" style="left:1932px;top:3497px;" width="21" height="20" viewBox="0 0 21 20"><rect x="1" y="1" width="16" height="16" stroke="#444" stroke-width="1.4" fill="none"/><path d="M1 6 H17 M6 1 V17" stroke="#444" stroke-width="1.3"/><circle cx="15" cy="15" r="4.5" stroke="#444" stroke-width="1.3" fill="#e8e8e8"/></svg>
<svg class="s" style="left:1971px;top:3499px;" width="22" height="15" viewBox="0 0 22 15"><path d="M1 7.5 Q11 -3 21 7.5 Q11 18 1 7.5 Z" stroke="#444" stroke-width="1.4" fill="none"/><circle cx="11" cy="7.5" r="3" stroke="#444" stroke-width="1.4" fill="none"/></svg>
<svg class="s" style="left:2014px;top:3496px;" width="22" height="22" viewBox="0 0 22 22"><rect x="6" y="6" width="10" height="10" stroke="#444" stroke-width="1.4" fill="none"/><path d="M11 1 V21 M1 11 H21" stroke="#444" stroke-width="1.4"/></svg>
<svg class="s" style="left:2038px;top:3505px;" width="8" height="5" viewBox="0 0 8 5"><path d="M1 1 L4 4 L7 1" stroke="#333" stroke-width="1.3" fill="none"/></svg>
<div style="left:2064px;top:3497px;width:1px;height:20px;background:#cfcfcf"></div>
<div style="left:2076px;top:3494px;width:28px;height:28px;background:#dcdcdc;border-radius:4px"></div>
<svg class="s" style="left:2081px;top:3498px;" width="19" height="19" viewBox="0 0 19 19"><rect x="1" y="1" width="17" height="17" stroke="#444" stroke-width="1.4" fill="none"/><path d="M1 6 H18 M6 1 V18" stroke="#444" stroke-width="1.3"/></svg>
<svg class="s" style="left:2122px;top:3498px;" width="19" height="19" viewBox="0 0 19 19"><rect x="1" y="1" width="17" height="17" stroke="#444" stroke-width="1.4" fill="none"/><path d="M9.5 1 V18" stroke="#444" stroke-width="1.3"/></svg>
<svg class="s" style="left:2162px;top:3498px;" width="19" height="19" viewBox="0 0 19 19"><rect x="1" y="1" width="17" height="13" stroke="#444" stroke-width="1.4" fill="none"/><path d="M5 18 H18 V8" stroke="#444" stroke-width="1.3" fill="none"/></svg>
<div style="left:2196px;top:3497px;width:1px;height:20px;background:#cfcfcf"></div>
<div class="t" style="left:2216px;top:3500.0px;font-size:16px;line-height:16px;color:#444;">100%</div>
<svg class="s" style="left:2269px;top:3505px;" width="8" height="5" viewBox="0 0 8 5"><path d="M1 1 L4 4 L7 1" stroke="#333" stroke-width="1.3" fill="none"/></svg>
<div style="left:2301px;top:3506px;width:14px;height:2px;background:#333"></div>
<div style="left:2332px;top:3507px;width:62px;height:1.5px;background:#3a6ea8"></div>
<div style="left:2392px;top:3484px;width:159px;height:36px;background:#fff;border-radius:7px;box-shadow:0 0 3px rgba(0,0,0,0.15)"></div>
<svg class="s" style="left:2401px;top:3490px;" width="26" height="24" viewBox="0 0 26 24"><path d="M22 5 C16 2 6 3 6 8 C6 13 20 11 20 16 C20 21 9 21 4 18" stroke="#e0702a" stroke-width="5" fill="none" stroke-linecap="round"/></svg>
<div style="left:2436px;top:3490px;width:1px;height:24px;background:#ddd"></div>
<div class="t" style="left:2449px;top:3492.5px;font-size:19px;line-height:19px;color:#111;">中</div>
<svg class="s" style="left:2487px;top:3493px;" width="20" height="20" viewBox="0 0 20 20"><path d="M11 1 C19 5 19 17 10 19 C7 19.5 4 18.5 1.5 16 C9 16 13 9 11 1 Z" stroke="#111" stroke-width="1.6" fill="none" stroke-linejoin="round"/></svg>
<svg class="s" style="left:2523px;top:3493px;" width="16" height="20" viewBox="0 0 16 20"><circle cx="5" cy="5" r="3" stroke="#111" stroke-width="1.4" fill="none"/><circle cx="12" cy="13" r="2.5" fill="#111"/><path d="M13 14 L10 19" stroke="#111" stroke-width="1.6"/></svg></body></html>
